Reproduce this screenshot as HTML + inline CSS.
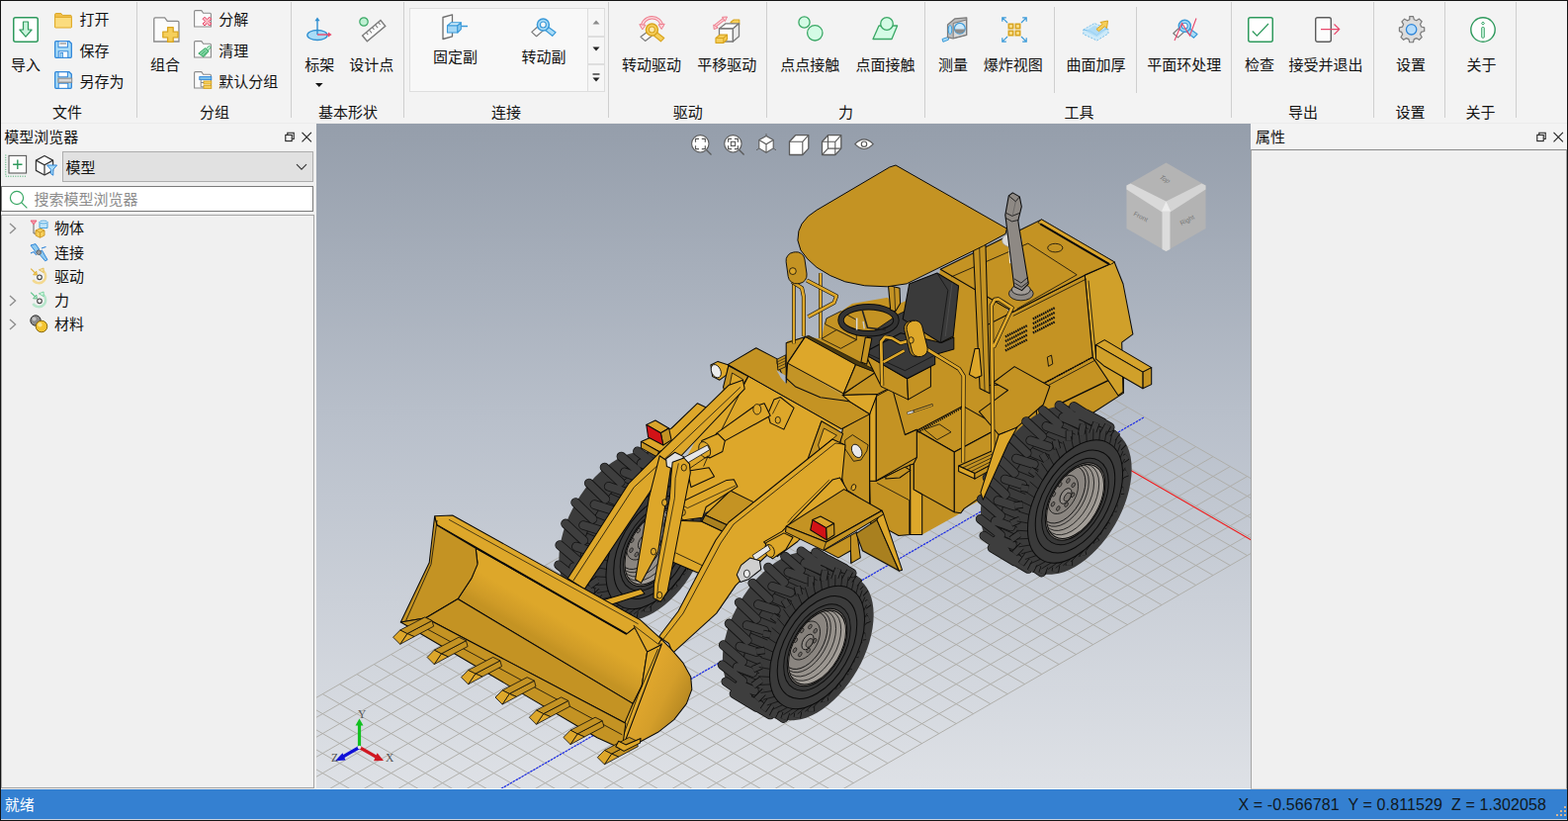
<!DOCTYPE html>
<html lang="zh-CN"><head><meta charset="utf-8"><title>CAD</title>
<style>
html,body{margin:0;padding:0}
body{width:1586px;height:830px;position:relative;overflow:hidden;background:#f0f0f0;font-family:"Liberation Sans","Noto Sans CJK SC",sans-serif;font-size:15px;color:#111}
.t{position:absolute;white-space:nowrap;line-height:20px;height:20px;font-size:15px}
.st{color:#101820;font-size:16px;letter-spacing:0.1px}
.ic{position:absolute;overflow:visible}
.tx{color:#111;font-family:"Liberation Sans","Noto Sans CJK SC",sans-serif}
#ribbon{position:absolute;left:0;top:0;width:1586px;height:125px;background:#f3f3f3;border-top:1px solid #141414;box-sizing:border-box;border-bottom:1px solid #ececec}
.sep{position:absolute;width:1px;background:#cfcfcf}
#gal{position:absolute;left:414px;top:8px;width:198px;height:85px;box-sizing:border-box;border:1px solid #dedede;background:#f8f8f8}
.galb{position:absolute;left:594px;width:18px;box-sizing:border-box;border:1px solid #dedede;background:#f6f6f6}
#lp{position:absolute;left:0;top:125px;width:319px;height:673px;background:#f0f0f0}
#lphead{position:absolute;left:0;top:125px;width:319px;height:27px;background:#f3f3f3}
#combo{position:absolute;left:63px;top:153px;width:254px;height:31px;box-sizing:border-box;border:1px solid #adadad;background:#e1e1e1}
#search{position:absolute;left:1px;top:188px;width:316px;height:26px;box-sizing:border-box;border:1px solid #7a7a7a;background:#fff}
#tree{position:absolute;left:1px;top:217px;width:317px;height:580px;box-sizing:border-box;border:1px solid #a5a5a5;background:#f0f0f0}
#rp{position:absolute;left:1265px;top:125px;width:321px;height:673px;background:#f0f0f0}
#rphead{position:absolute;left:1265px;top:125px;width:321px;height:26px;background:#f3f3f3}
#rpbox{position:absolute;left:1265px;top:151px;width:320px;height:647px;box-sizing:border-box;border:1px solid #a5a5a5;border-top-color:#8a8a8a;border-bottom-color:#d6d2cd;background:#f0f0f0}
#status{position:absolute;left:0;top:798px;width:1586px;height:31px;background:#3480d1;box-sizing:border-box;border-bottom:1px solid #c9d3df}
#frame{position:absolute;left:0;top:0;width:1586px;height:830px;box-sizing:border-box;border:1px solid #141414;z-index:9;pointer-events:none}
#vpb{position:absolute;left:320px;top:797px;width:945px;height:1px;background:#fbfbfb;z-index:3}
#vp{position:absolute;left:320px;top:125px;width:945px;height:673px;display:block}
</style></head>
<body>
<div id="ribbon"></div>
<div class="sep" style="left:138px;top:2px;height:117px"></div>
<div class="sep" style="left:294px;top:2px;height:117px"></div>
<div class="sep" style="left:408px;top:2px;height:117px"></div>
<div class="sep" style="left:615px;top:2px;height:117px"></div>
<div class="sep" style="left:775px;top:2px;height:117px"></div>
<div class="sep" style="left:935px;top:2px;height:117px"></div>
<div class="sep" style="left:1245px;top:2px;height:117px"></div>
<div class="sep" style="left:1389px;top:2px;height:117px"></div>
<div class="sep" style="left:1461px;top:2px;height:117px"></div>
<div class="sep" style="left:1533px;top:2px;height:117px"></div>
<div class="sep" style="left:1066px;top:7px;height:87px"></div>
<div class="sep" style="left:1149px;top:7px;height:87px"></div>
<div id="gal"></div><div class="galb" style="top:8px;height:29px"></div><div class="galb" style="top:37px;height:28px"></div><div class="galb" style="top:65px;height:28px"></div>
<svg class="ic" style="left:598px;top:17px" width="10" height="80" viewBox="0 0 10 80"><path d="M1.5 7.5h7L5 3.5z" fill="#8a8a8a"/><path d="M1.5 30.5h7L5 34.5z" fill="#222"/><path d="M1.5 58h7" stroke="#222" stroke-width="1.3"/><path d="M1.5 61.5h7L5 65.5z" fill="#222"/></svg>
<svg class="ic" style="left:13px;top:17px" width="28" height="28" viewBox="0 0 28 28"><rect x="0.75" y="0.75" width="24.5" height="24.5" rx="2" fill="#fff" stroke="#2f9a5d" stroke-width="1.5"/><path d="M10.5 5h5v8h3.6L13 20.2 6.9 13h3.6z" fill="#c9f3dc" stroke="#2f9a5d" stroke-width="1.2" stroke-linejoin="round"/></svg>
<span class="t tx" style="left:-34.0px;top:55.5px;width:120px;text-align:center;">导入</span>
<svg class="ic" style="left:154.5px;top:17px" width="28" height="28" viewBox="0 0 28 28"><path d="M0.75 25V2.2q0-1.4 1.4-1.4h9.5l2.6 3.6h10.3q1.4 0 1.4 1.4V25z" fill="#fbfbfb" stroke="#8a8a8a" stroke-width="1.3"/><path d="M14.6 10.6h5.6v4.6h4.8v5.6h-4.8v4.6h-5.6v-4.6h-4.8v-5.6h4.8z" fill="#f6cf5a" stroke="#d9a520" stroke-width="1.3" stroke-linejoin="round"/></svg>
<span class="t tx" style="left:107.0px;top:55.5px;width:120px;text-align:center;">组合</span>
<svg class="ic" style="left:310px;top:17px" width="28" height="28" viewBox="0 0 28 28"><ellipse cx="11" cy="18.5" rx="10.2" ry="5" fill="#a9dcf7" stroke="#2f8fd1" stroke-width="1.3"/><path d="M11 18V3" stroke="#2f8fd1" stroke-width="1.4"/><path d="M8.4 4.2L11 0.4l2.6 3.8z" fill="#2f8fd1"/><path d="M11 18h12" stroke="#e8486b" stroke-width="1.4"/><path d="M22 15.6l3.6 2.4-3.6 2.4z" fill="#e8486b"/></svg>
<span class="t tx" style="left:263.3px;top:55.5px;width:120px;text-align:center;">标架</span>
<svg class="ic" style="left:363px;top:17px" width="28" height="28" viewBox="0 0 28 28"><circle cx="5" cy="5" r="4.2" fill="#bff0d3" stroke="#3aa865" stroke-width="1.2"/><g transform="rotate(-40 15 14)"><rect x="3" y="10.5" width="24" height="7.5" fill="#fafafa" stroke="#7b7b7b" stroke-width="1.4"/><path d="M8 10.5v3M12 10.5v4M16 10.5v3M20 10.5v4M24 10.5v3" stroke="#7b7b7b" stroke-width="1"/></g></svg>
<span class="t tx" style="left:315.8px;top:55.5px;width:120px;text-align:center;">设计点</span>
<svg class="ic" style="left:446.5px;top:14px" width="28" height="28" viewBox="0 0 28 28"><path d="M1 3.5l9.5-2.7v22L1 25.5z" fill="#fafafa" stroke="#6e6e6e" stroke-width="1.3" stroke-linejoin="round"/><path d="M5.5 12l3.6-3.2h10.2L15.8 12z" fill="#cfeaf9" stroke="#3a9ad9" stroke-width="1.1" stroke-linejoin="round"/><path d="M5.5 12h10.3v7H5.5z" fill="#a5d7f5" stroke="#3a9ad9" stroke-width="1.1" stroke-linejoin="round"/><path d="M15.8 12l3.5-3.2v6.8l-3.5 3.4z" fill="#8fcaee" stroke="#3a9ad9" stroke-width="1.1" stroke-linejoin="round"/><path d="M19.5 12.5H26" stroke="#3a9ad9" stroke-width="1.5"/></svg>
<span class="t tx" style="left:400.6px;top:48.0px;width:120px;text-align:center;">固定副</span>
<svg class="ic" style="left:537px;top:18px" width="28" height="28" viewBox="0 0 28 28"><path d="M8 8l5 4.4-7.4 6.3L0.8 14.4z" fill="#fafafa" stroke="#7a7a7a" stroke-width="1.2" stroke-linejoin="round"/><path d="M16.5 8.5l8.6 6.2-3.4 3.6-8-6.6z" fill="#a9dcf7" stroke="#3a9ad9" stroke-width="1.2" stroke-linejoin="round"/><circle cx="12.4" cy="7" r="6" fill="#a9dcf7" stroke="#3a9ad9" stroke-width="1.5"/><circle cx="12.4" cy="7" r="3" fill="#f7f7f7" stroke="#3a9ad9" stroke-width="1.2"/></svg>
<span class="t tx" style="left:490.0px;top:48.0px;width:120px;text-align:center;">转动副</span>
<svg class="ic" style="left:647px;top:15.5px" width="28" height="28" viewBox="0 0 28 28"><path d="M2.5 11.5A10 9.5 0 0 1 22.5 11" fill="none" stroke="#ee7d8d" stroke-width="3.4"/><path d="M2.5 11.5A10 9.5 0 0 1 22.5 11" fill="none" stroke="#fbd3d9" stroke-width="1.6"/><path d="M-0.2 8.6l3 5.3 3.2-4.6z" fill="#fbd3d9" stroke="#ee7d8d" stroke-width="1"/><path d="M25.2 8.2l-3 5.3-3.2-4.6z" fill="#fbd3d9" stroke="#ee7d8d" stroke-width="1"/><path d="M8 16l4.6 4-7 5.4-4.6-4.2z" fill="#fafafa" stroke="#7a7a7a" stroke-width="1.2" stroke-linejoin="round"/><path d="M16.5 16l8.3 6.4-3.4 3.4-8-6.6z" fill="#f6cf5a" stroke="#d9a520" stroke-width="1.2" stroke-linejoin="round"/><circle cx="12.4" cy="14" r="6" fill="#f6cf5a" stroke="#d9a520" stroke-width="1.5"/><circle cx="12.4" cy="14" r="3" fill="#fbe9ac" stroke="#d9a520" stroke-width="1.1"/></svg>
<span class="t tx" style="left:599.1px;top:55.5px;width:120px;text-align:center;">转动驱动</span>
<svg class="ic" style="left:722px;top:16.5px" width="28" height="28" viewBox="0 0 28 28"><path d="M1 9.5L10.5 2" stroke="#ee7d8d" stroke-width="3.2"/><path d="M1 9.5L10.5 2" stroke="#fbd3d9" stroke-width="1.4"/><path d="M8.5 0.3l5 -0.3-2.2 4.6z" fill="#fbd3d9" stroke="#ee7d8d" stroke-width="1"/><path d="M-0.2 8l0.4 4.6 4-1.6z" fill="#fbd3d9" stroke="#ee7d8d" stroke-width="1"/><path d="M17 5.5l3.2-2.5h5.6v4.5l-3 2z" fill="#f6cf5a" stroke="#d9a520" stroke-width="1.1" stroke-linejoin="round"/><path d="M5.5 12L12 6.8h13.5L19.4 12z" fill="#fff" stroke="#7a7a7a" stroke-width="1.3" stroke-linejoin="round"/><path d="M5.5 12h13.9v13H5.5z" fill="#fcfcfc" stroke="#7a7a7a" stroke-width="1.3" stroke-linejoin="round"/><path d="M19.4 12l6.1-5.2v13L19.4 25z" fill="#ececec" stroke="#7a7a7a" stroke-width="1.3" stroke-linejoin="round"/><path d="M2 21.5l4-3.3h7.5v4.6L9.8 26.3H2z" fill="#f6cf5a" stroke="#d9a520" stroke-width="1.2" stroke-linejoin="round"/><path d="M2 21.5h7.8v4.8M9.8 21.5l3.7-3.3" fill="none" stroke="#d9a520" stroke-width="1.1"/></svg>
<span class="t tx" style="left:675.2px;top:55.5px;width:120px;text-align:center;">平移驱动</span>
<svg class="ic" style="left:806.5px;top:16px" width="28" height="28" viewBox="0 0 28 28"><circle cx="6.5" cy="6.5" r="5.6" fill="#d4fbe5" stroke="#3aa865" stroke-width="1.3"/><circle cx="17.3" cy="17.3" r="7.7" fill="#d4fbe5" stroke="#3aa865" stroke-width="1.3"/></svg>
<span class="t tx" style="left:759.3px;top:55.5px;width:120px;text-align:center;">点点接触</span>
<svg class="ic" style="left:882px;top:17px" width="28" height="28" viewBox="0 0 28 28"><path d="M7 9h18.6l-5.6 13.5H1z" fill="#d4fbe5" stroke="#3aa865" stroke-width="1.3" stroke-linejoin="round"/><circle cx="15" cy="7" r="6.3" fill="#d4fbe5" stroke="#3aa865" stroke-width="1.3"/></svg>
<span class="t tx" style="left:835.4px;top:55.5px;width:120px;text-align:center;">点面接触</span>
<svg class="ic" style="left:952px;top:17px" width="28" height="28" viewBox="0 0 28 28"><path d="M1 22.5l6.5-2.2v2.8l-5.6 2.2z" fill="#a9dcf7" stroke="#3a9ad9" stroke-width="1"/><path d="M6.5 8L14 1.8l11.8-1v17.5L12 22 6.5 20.7z" fill="#bdbdbd" stroke="#7a7a7a" stroke-width="1.2" stroke-linejoin="round"/><path d="M12.2 6.5L25.5 3v15.2L12.2 21.6z" fill="#d9d9d9" stroke="#7a7a7a" stroke-width="1"/><ellipse cx="9" cy="13" rx="1.8" ry="4.5" fill="#a9dcf7" stroke="#3a9ad9" stroke-width="0.9"/><circle cx="18.8" cy="11.8" r="5.4" fill="#cde9fa" stroke="#3a9ad9" stroke-width="1.2"/><path d="M13.5 12.5a5.4 5.4 0 0 0 10.6 0z" fill="#8c8c8c"/></svg>
<span class="t tx" style="left:904.0px;top:55.5px;width:120px;text-align:center;">测量</span>
<svg class="ic" style="left:1012.5px;top:17px" width="28" height="28" viewBox="0 0 28 28"><g fill="#fbe08a" stroke="#d9a520" stroke-width="1.6"><rect x="7.3" y="7.3" width="4.4" height="4.4"/><rect x="14.3" y="7.3" width="4.4" height="4.4"/><rect x="7.3" y="14.3" width="4.4" height="4.4"/><rect x="14.3" y="14.3" width="4.4" height="4.4"/></g><g fill="none" stroke="#3a9ad9" stroke-width="1.2"><path d="M6 6L0.8 0.8M0.8 4.8V0.8H4.8M20 6l5.2-5.2M21.2 0.8h4v4M6 20L0.8 25.2M0.8 21.2v4h4M20 20l5.2 5.2M25.2 21.2v4h-4"/></g></svg>
<span class="t tx" style="left:964.7px;top:55.5px;width:120px;text-align:center;">爆炸视图</span>
<svg class="ic" style="left:1094.5px;top:18px" width="28" height="28" viewBox="0 0 28 28"><path d="M0.8 12L12 5.5 26 11.5v4.5L14.5 23 0.8 16.5z" fill="#cdeaf9" stroke="#7cc0ea" stroke-width="1" stroke-dasharray="2 1.4"/><path d="M0.8 12q7 0 13.7 5.5Q20 11 26 11.5" fill="none" stroke="#7cc0ea" stroke-width="1"/><path d="M3 13.5L12 8l11.5 4.8-9 6.4z" fill="#a5d7f5" opacity=".75"/><path d="M14 11.5l6-5-2-2 7.5-1.5-1 7.6-2-2-6 5z" fill="#f6cf5a" stroke="#d9a520" stroke-width="1" stroke-linejoin="round"/></svg>
<span class="t tx" style="left:1048.4px;top:55.5px;width:120px;text-align:center;">曲面加厚</span>
<svg class="ic" style="left:1186px;top:18px" width="28" height="28" viewBox="0 0 28 28"><path d="M7.5 9.5l5 4-7 6.4-4.7-4.2z" fill="#fafafa" stroke="#7a7a7a" stroke-width="1.2" stroke-linejoin="round"/><path d="M16 10l9 6.5-3.5 3.7-8-6.6z" fill="#a9dcf7" stroke="#3a9ad9" stroke-width="1.2" stroke-linejoin="round"/><circle cx="12.3" cy="8.3" r="6" fill="#a9dcf7" stroke="#3a9ad9" stroke-width="1.5"/><circle cx="12.3" cy="8.3" r="3" fill="#f7f7f7" stroke="#3a9ad9" stroke-width="1.1"/><path d="M2 23L9.5 5.5 17.5 18 24 0.5" fill="none" stroke="#e8486b" stroke-width="1.1"/></svg>
<span class="t tx" style="left:1137.7px;top:55.5px;width:120px;text-align:center;">平面环处理</span>
<svg class="ic" style="left:1261.5px;top:17px" width="28" height="28" viewBox="0 0 28 28"><rect x="0.75" y="0.75" width="24.5" height="24.5" rx="2" fill="#fff" stroke="#2f9a5d" stroke-width="1.5"/><path d="M4.8 14.5l4.6 4.6L21 7" fill="none" stroke="#2f9a5d" stroke-width="1.3"/></svg>
<span class="t tx" style="left:1214.0px;top:55.5px;width:120px;text-align:center;">检查</span>
<svg class="ic" style="left:1330px;top:17px" width="28" height="28" viewBox="0 0 28 28"><rect x="0.7" y="0.7" width="15.6" height="24.6" rx="2" fill="#fcfcfc" stroke="#5c5c5c" stroke-width="1.4"/><path d="M6 12.6h18.5M19.5 7.5l5.2 5.1-5.2 5.1" fill="none" stroke="#e8486b" stroke-width="1.2"/></svg>
<span class="t tx" style="left:1281.1px;top:55.5px;width:120px;text-align:center;">接受并退出</span>
<svg class="ic" style="left:1414.5px;top:17px" width="28" height="28" viewBox="0 0 28 28"><path d="M11 0.8h4l0.9 3.4 2.6 1.1 3-1.8 2.9 2.9-1.8 3 1.1 2.6 3.4 0.9v4l-3.4 0.9-1.1 2.6 1.8 3-2.9 2.9-3-1.8-2.6 1.1-0.9 3.4h-4l-0.9-3.4-2.6-1.1-3 1.8-2.9-2.9 1.8-3-1.1-2.6L-0.1 17v-4l3.4-0.9 1.1-2.6-1.8-3 2.9-2.9 3 1.8 2.6-1.1z" transform="translate(0.5,-1.2) scale(0.93)" fill="#dcdcdc" stroke="#7a7a7a" stroke-width="1.3" stroke-linejoin="round"/><circle cx="12.6" cy="12.8" r="5.2" fill="#b6dcfa" stroke="#2f86d9" stroke-width="1.3"/></svg>
<span class="t tx" style="left:1366.9px;top:55.5px;width:120px;text-align:center;">设置</span>
<svg class="ic" style="left:1486.5px;top:17px" width="28" height="28" viewBox="0 0 28 28"><circle cx="13" cy="13" r="12.2" fill="#fdfdfd" stroke="#2f9a5d" stroke-width="1.4"/><path d="M13 5l1.5 1.6L13 8.2l-1.5-1.6z" fill="#d4fbe5" stroke="#2f9a5d" stroke-width="0.9"/><rect x="11.7" y="10.6" width="2.6" height="10.6" rx="0.6" fill="#d4fbe5" stroke="#2f9a5d" stroke-width="0.9"/></svg>
<span class="t tx" style="left:1438.5px;top:55.5px;width:120px;text-align:center;">关于</span>
<svg class="ic" style="left:318px;top:83px" width="10" height="6" viewBox="0 0 10 6"><path d="M1 1h7.6L4.8 5z" fill="#111"/></svg>
<svg class="ic" style="left:55px;top:11.5px" width="19" height="19" viewBox="0 0 19 19"><path d="M0.6 15.4V2.6q0-1 1-1h5.3l1.4 1.8h8q1 0 1 1v11z" fill="#f2c04a" stroke="#d9a520" stroke-width="1"/><path d="M0.6 15.4V6.4q0-1 1-1h14.7q1 0 1 1v9q0 0.6-0.6 0.6H1.2q-0.6 0-0.6-0.6z" fill="#fbdc7e" stroke="#e0aa28" stroke-width="1"/></svg>
<span class="t tx" style="left:80.4px;top:10.3px;">打开</span>
<svg class="ic" style="left:55px;top:41px" width="19" height="19" viewBox="0 0 19 19"><path d="M0.7 1.7q0-1 1-1h13.2l2.4 2.4v13.2q0 1-1 1H1.7q-1 0-1-1z" fill="#a9dcf7" stroke="#2f86d9" stroke-width="1.3"/><rect x="4" y="0.8" width="9.4" height="6" fill="#fff" stroke="#2f86d9" stroke-width="1"/><path d="M5.5 3h6.5" stroke="#9a9a9a" stroke-width="1.4"/><rect x="4.2" y="10.8" width="9.6" height="6.5" fill="#fff" stroke="#2f86d9" stroke-width="1"/><rect x="6" y="12.4" width="2.6" height="4.9" fill="#a9dcf7" stroke="#2f86d9" stroke-width=".8"/></svg>
<span class="t tx" style="left:80.4px;top:41.5px;">保存</span>
<svg class="ic" style="left:55px;top:72px" width="19" height="19" viewBox="0 0 19 19"><path d="M0.7 1.7q0-1 1-1h13.2l2.4 2.4v13.2q0 1-1 1H1.7q-1 0-1-1z" fill="#a9dcf7" stroke="#2f86d9" stroke-width="1.3"/><rect x="4" y="0.8" width="9.4" height="5" fill="#fff" stroke="#2f86d9" stroke-width="1"/><rect x="4.2" y="12.2" width="9.6" height="5.1" fill="#fff" stroke="#2f86d9" stroke-width="1"/><rect x="3.8" y="7" width="14" height="4.4" fill="#b5b5b5" stroke="#8a8a8a" stroke-width="0.8"/><path d="M6 8.2v2M8 8.2v2M10 8.2v2M12 8.2v2M14 8.2v2M16 8.2v2" stroke="#fff" stroke-width="1"/></svg>
<span class="t tx" style="left:80.4px;top:72.6px;">另存为</span>
<svg class="ic" style="left:196px;top:10px" width="19" height="19" viewBox="0 0 19 19"><path d="M0.6 17V1.6q0-1 1-1h6.2l1.8 2.6h6.8q1 0 1 1V17z" fill="#fbfbfb" stroke="#8a8a8a" stroke-width="1.1"/><path d="M9 9.2l2-2 2.4 2.4 2.4-2.4 2 2-2.4 2.4 2.4 2.4-2 2-2.4-2.4L11 16l-2-2 2.4-2.4z" fill="#f9b8c2" stroke="#e8486b" stroke-width="1" stroke-linejoin="round"/></svg>
<span class="t tx" style="left:221.3px;top:10.3px;">分解</span>
<svg class="ic" style="left:196px;top:41px" width="19" height="19" viewBox="0 0 19 19"><path d="M0.6 17V1.6q0-1 1-1h6.2l1.8 2.6h6.8q1 0 1 1V17z" fill="#fbfbfb" stroke="#8a8a8a" stroke-width="1.1"/><path d="M15.8 5.2l1.6 1.6-3 3.4-2-2z" fill="#bff0d3" stroke="#3aa865" stroke-width="0.9"/><path d="M11.6 7.6l3.4 3.4-5 5.6-5.2-3.6z" fill="#7fd6a3" stroke="#3aa865" stroke-width="1" stroke-linejoin="round"/><path d="M7.5 14.6l4-4.4M9.5 15.8l3.6-4.2" stroke="#3aa865" stroke-width="0.8"/></svg>
<span class="t tx" style="left:221.3px;top:41.5px;">清理</span>
<svg class="ic" style="left:196px;top:72px" width="19" height="19" viewBox="0 0 19 19"><path d="M0.6 17V1.6q0-1 1-1h6.2l1.8 2.6h6.8q1 0 1 1V17z" fill="#fbfbfb" stroke="#8a8a8a" stroke-width="1.1"/><rect x="5.8" y="5.6" width="12" height="3" fill="#7cc0ea" stroke="#2f86d9" stroke-width="0.9"/><rect x="10" y="10" width="7.8" height="3" fill="#f6cf5a" stroke="#d9a520" stroke-width="0.9"/><rect x="10" y="14.4" width="7.8" height="3" fill="#f6cf5a" stroke="#d9a520" stroke-width="0.9"/><path d="M7.2 8.6v7.2h2.8M7.2 11.5h2.8" fill="none" stroke="#7a7a7a" stroke-width="0.9"/></svg>
<span class="t tx" style="left:221.3px;top:72.6px;">默认分组</span>
<span class="t tx" style="left:8.0px;top:104.0px;width:120px;text-align:center;">文件</span>
<span class="t tx" style="left:157.0px;top:104.0px;width:120px;text-align:center;">分组</span>
<span class="t tx" style="left:292.0px;top:104.0px;width:120px;text-align:center;">基本形状</span>
<span class="t tx" style="left:452.0px;top:104.0px;width:120px;text-align:center;">连接</span>
<span class="t tx" style="left:635.8px;top:104.0px;width:120px;text-align:center;">驱动</span>
<span class="t tx" style="left:795.5px;top:104.0px;width:120px;text-align:center;">力</span>
<span class="t tx" style="left:1031.6px;top:104.0px;width:120px;text-align:center;">工具</span>
<span class="t tx" style="left:1257.9px;top:104.0px;width:120px;text-align:center;">导出</span>
<span class="t tx" style="left:1366.5px;top:104.0px;width:120px;text-align:center;">设置</span>
<span class="t tx" style="left:1437.5px;top:104.0px;width:120px;text-align:center;">关于</span>
<div id="lp"></div><div id="lphead"></div>
<span class="t tx" style="left:4.2px;top:129.0px;">模型浏览器</span>
<svg class="ic" style="left:288px;top:133px" width="28" height="12" viewBox="0 0 28 12"><path d="M2.8 3.2V1.3h6.4v6.2H7.6" fill="none" stroke="#222" stroke-width="1.1"/><rect x="0.8" y="3.4" width="6.4" height="6.2" fill="none" stroke="#222" stroke-width="1.1"/><path d="M17.5 0.8l9.4 9.6M26.9 0.8l-9.4 9.6" stroke="#222" stroke-width="1.1"/></svg>
<svg class="ic" style="left:5px;top:156px" width="24" height="24" viewBox="0 0 24 24"><path d="M0.8 0.5V22.2H22" fill="none" stroke="#3aa865" stroke-width="1" stroke-dasharray="1 1.4"/><rect x="4" y="1.4" width="17.6" height="17.6" fill="#fdfdfd" stroke="#5c5c5c" stroke-width="1.1"/><path d="M12.8 5.5v9.4M8.1 10.2h9.4" stroke="#2f9a5d" stroke-width="1.4"/></svg>
<svg class="ic" style="left:35px;top:156px" width="24" height="24" viewBox="0 0 24 24"><path d="M10 1.5l8.6 4.6v10.3L10 21 1.4 16.4V6.1z" fill="#fdfdfd" stroke="#333" stroke-width="1.2" stroke-linejoin="round"/><path d="M1.4 6.1L10 10.8l8.6-4.7M10 10.8V21" fill="none" stroke="#333" stroke-width="1.2"/><path d="M12.6 11h10l-3.8 4.4v5.8l-2.4-1.6v-4.2z" fill="#a9dcf7" stroke="#2f86d9" stroke-width="1" stroke-linejoin="round"/></svg>
<div id="combo"></div>
<span class="t tx" style="left:66.5px;top:159.8px;">模型</span>
<svg class="ic" style="left:299px;top:165px" width="12" height="8" viewBox="0 0 12 8"><path d="M1 1.2l5 5 5-5" fill="none" stroke="#333" stroke-width="1.1"/></svg>
<div id="search"></div>
<svg class="ic" style="left:9px;top:192px" width="20" height="20" viewBox="0 0 20 20"><circle cx="8" cy="8" r="6.6" fill="none" stroke="#3aa865" stroke-width="1.2"/><path d="M12.8 12.8l5.6 5.6" stroke="#3aa865" stroke-width="1.2"/></svg>
<span class="t tx" style="left:34.6px;top:191.5px;color:#8c8c8c;">搜索模型浏览器</span>
<div id="tree"></div>
<svg class="ic" style="left:9px;top:225.4px" width="8" height="12" viewBox="0 0 8 12"><path d="M1 1l5.600 5-5.600 5" fill="none" stroke="#8c8c8c" stroke-width="1.300"/></svg>
<svg class="ic" style="left:30px;top:221.9px" width="20" height="20" viewBox="0 0 20 20"><path d="M1 1h6L4 5z" fill="#f39aa6" stroke="#e8486b" stroke-width=".8"/><path d="M4 5v9h3" fill="none" stroke="#666" stroke-width="1"/><path d="M10 2.5h8v6h-8z" fill="#bfe3f8" stroke="#3a9ad9" stroke-width=".9"/><ellipse cx="14" cy="2.5" rx="4" ry="1.4" fill="#dff1fb" stroke="#3a9ad9" stroke-width=".8"/><path d="M6 11l4.5-2 4.5 2v5l-4.5 2.3L6 16z" fill="#f6cf5a" stroke="#c9921c" stroke-width=".9" stroke-linejoin="round"/><path d="M6 11l4.5 2 4.5-2M10.500 13v5" fill="none" stroke="#c9921c" stroke-width=".8"/></svg>
<span class="t tx" style="left:54.9px;top:221.4px;">物体</span>
<svg class="ic" style="left:30px;top:246.3px" width="20" height="20" viewBox="0 0 20 20"><path d="M1 2l5-1.4 3.6 5.4-3 3.400z" fill="#8fcaee" stroke="#2f86d9" stroke-width="1" stroke-linejoin="round"/><path d="M9 10l3.400-3 5.600 9.600-2.400 1.200z" fill="#8fcaee" stroke="#2f86d9" stroke-width="1" stroke-linejoin="round"/><path d="M1 10l3-1.400 3 3.400M12 5l4.500-1.600" fill="none" stroke="#2f86d9" stroke-width="1.100"/><circle cx="9.200" cy="9.200" r="2.300" fill="#9a9a9a" stroke="#555" stroke-width=".8"/></svg>
<span class="t tx" style="left:54.9px;top:245.8px;">连接</span>
<svg class="ic" style="left:30px;top:270.4px" width="20" height="20" viewBox="0 0 20 20"><path d="M1.200 1.600l4.600 4.600" stroke="#e0b13a" stroke-width="1.200"/><path d="M3.600 7.800l3.800 0.200-0.600-3.800z" fill="#f6cf5a" stroke="#d9a520" stroke-width=".7"/><path d="M12.800 3.200a7 7 0 1 1-9.500 9.800" fill="none" stroke="#f3d990" stroke-width="2.400"/><path d="M9.300 2.800l4.800-1.800 0 4.600z" fill="#f6e2a6" stroke="#e0b13a" stroke-width=".7"/><circle cx="10" cy="10.300" r="2.300" fill="#fafafa" stroke="#444" stroke-width="1.100"/></svg>
<span class="t tx" style="left:54.9px;top:269.9px;">驱动</span>
<svg class="ic" style="left:9px;top:297.7px" width="8" height="12" viewBox="0 0 8 12"><path d="M1 1l5.600 5-5.600 5" fill="none" stroke="#8c8c8c" stroke-width="1.300"/></svg>
<svg class="ic" style="left:30px;top:294.2px" width="20" height="20" viewBox="0 0 20 20"><path d="M1.200 1.600l4.600 4.600" stroke="#5cc48a" stroke-width="1.200"/><path d="M3.600 7.800l3.800 0.200-0.600-3.800z" fill="#bff0d3" stroke="#3aa865" stroke-width=".7"/><path d="M12.800 3.200a7 7 0 1 1-9.500 9.800" fill="none" stroke="#b6e6cb" stroke-width="2.400"/><path d="M9.300 2.800l4.800-1.800 0 4.600z" fill="#d4fbe5" stroke="#5cc48a" stroke-width=".7"/><circle cx="10" cy="10.300" r="2.300" fill="#fafafa" stroke="#444" stroke-width="1.100"/></svg>
<span class="t tx" style="left:54.9px;top:293.7px;">力</span>
<svg class="ic" style="left:9px;top:321.8px" width="8" height="12" viewBox="0 0 8 12"><path d="M1 1l5.600 5-5.600 5" fill="none" stroke="#8c8c8c" stroke-width="1.300"/></svg>
<svg class="ic" style="left:30px;top:318.3px" width="20" height="20" viewBox="0 0 20 20"><circle cx="6" cy="6" r="5.200" fill="#8a8a8a" stroke="#333" stroke-width="1"/><circle cx="4.600" cy="4.400" r="2" fill="#c4c4c4"/><circle cx="12" cy="12" r="5.800" fill="#f4c430" stroke="#8a6a10" stroke-width="1"/><circle cx="10.400" cy="10.200" r="2.200" fill="#fbe48e"/></svg>
<span class="t tx" style="left:54.9px;top:317.8px;">材料</span>
<div id="rp"></div><div id="rphead"></div><div id="rpbox"></div>
<span class="t tx" style="left:1270.0px;top:128.6px;">属性</span>
<svg class="ic" style="left:1554px;top:133px" width="28" height="12" viewBox="0 0 28 12"><path d="M2.8 3.200V1.300h6.400v6.200H7.600" fill="none" stroke="#222" stroke-width="1.100"/><rect x="0.800" y="3.400" width="6.400" height="6.200" fill="none" stroke="#222" stroke-width="1.100"/><path d="M17.500 0.800l9.400 9.600M26.900 0.800l-9.400 9.600" stroke="#222" stroke-width="1.100"/></svg>
<div id="vpb"></div><div id="status"></div><div id="frame"></div>
<span class="t tx" style="left:4.7px;top:803.5px;color:#fff;">就绪</span>
<span class="t st" style="left:1252.5px;top:804.3px;">X = -0.566781&nbsp; Y = 0.811529&nbsp; Z = 1.302058</span>
<svg class="ic" style="left:1574px;top:815px" width="12" height="12" viewBox="0 0 12 12"><g fill="#d8b690"><rect x="8" y="0" width="2" height="2"/><rect x="4" y="4" width="2" height="2"/><rect x="8" y="4" width="2" height="2"/><rect x="0" y="8" width="2" height="2"/><rect x="4" y="8" width="2" height="2"/><rect x="8" y="8" width="2" height="2"/></g></svg>
<svg id="vp" viewBox="320 125 945 673" width="945" height="673">
<defs><linearGradient id="bg" x1="0" y1="0" x2="0" y2="1"><stop offset="0" stop-color="#959eab"/><stop offset="0.45" stop-color="#b9c0cb"/><stop offset="1" stop-color="#dee1e6"/></linearGradient></defs>
<rect x="320" y="125" width="945" height="673" fill="url(#bg)"/>
<path d="M984.5 321.6L151.4 802.6M1001.8 331.6L168.7 812.6M1019.1 341.6L186.0 822.6M1036.5 351.6L203.3 832.6M1053.8 361.6L220.7 842.6M1071.1 371.6L238.0 852.6M1088.4 381.6L255.3 862.6M1105.7 391.6L272.6 872.6M1123.1 401.6L289.9 882.6M1140.4 411.6L307.3 892.6M1157.7 421.6L324.6 902.6M1175.0 431.6L341.9 912.6M1192.3 441.6L359.2 922.6M1209.7 451.6L376.5 932.6M1227.0 461.6L393.9 942.6M1244.3 471.6L411.2 952.6M1261.6 481.6L428.5 962.6M1278.9 491.6L445.8 972.6M1296.3 501.6L463.1 982.6M1313.6 511.6L480.5 992.6M1330.9 521.6L497.8 1002.6M984.5 321.6L1330.9 521.6M967.2 331.6L1313.6 531.6M949.8 341.6L1296.3 541.6M932.5 351.6L1278.9 551.6M915.2 361.6L1261.6 561.6M897.9 371.6L1244.3 571.6M880.6 381.6L1227.0 581.6M863.2 391.6L1209.7 591.6M845.9 401.6L1192.3 601.6M828.6 411.6L1175.0 611.6M811.3 421.6L1157.7 621.6M794.0 431.6L1140.4 631.6M776.6 441.6L1123.1 641.6M759.3 451.6L1105.7 651.6M742.0 461.6L1088.4 661.6M724.7 471.6L1071.1 671.6M707.4 481.6L1053.8 681.6M690.0 491.6L1036.5 691.6M672.7 501.6L1019.1 701.6M655.4 511.6L1001.8 711.6M638.1 521.6L984.5 721.6M620.8 531.6L967.2 731.6M603.4 541.6L949.8 741.6M586.1 551.6L932.5 751.6M568.8 561.6L915.2 761.6M551.5 571.6L897.9 771.6M534.2 581.6L880.6 781.6M516.8 591.6L863.2 791.6M499.5 601.6L845.9 801.6M482.2 611.6L828.6 811.6M464.9 621.6L811.3 821.6M447.6 631.6L794.0 831.6M430.2 641.6L776.6 841.6M412.9 651.6L759.3 851.6M395.6 661.6L742.0 861.6M378.3 671.6L724.7 871.6M361.0 681.6L707.4 881.6M343.6 691.6L690.0 891.6M326.3 701.6L672.7 901.6M309.0 711.6L655.4 911.6M291.7 721.6L638.1 921.6M274.3 731.6L620.8 931.6M257.0 741.6L603.4 941.6M239.7 751.6L586.1 951.6M222.4 761.6L568.8 961.6M205.1 771.6L551.5 971.6M187.7 781.6L534.2 981.6M170.4 791.6L516.8 991.6M153.1 801.6L499.5 1001.6" fill="none" stroke="#acaba6" stroke-width="1" opacity="0.92"/>
<path d="M1156.8 422.1L324.6 902.6" stroke="#1a2cf0" stroke-width="1.2" stroke-dasharray="2.4 1"/>
<path d="M1104.0 452.6L1277.2 552.6" stroke="#f01818" stroke-width="1.1"/>
<g id="loader">
<ellipse cx="623.8" cy="532.0" rx="82.7" ry="47.7" transform="rotate(-60 623.8 532.0)" fill="#3b3b3b"/><polygon points="582.4,603.6 619.7,625.1 702.3,481.9 665.1,460.4" fill="#3b3b3b"/><ellipse cx="661.0" cy="553.5" rx="80.8" ry="46.7" transform="rotate(-60 661.0 553.5)" fill="#3b3b3b"/><path d="M689.8 476.1L706.5 486.9M685.4 472.8L702.3 483.4M680.4 470.5L697.5 480.8M675.0 469.1L692.3 479.2M669.2 468.7L686.6 478.5M663.0 469.3L680.5 478.9M656.6 470.9L674.2 480.2M650.0 473.4L667.7 482.5M643.3 476.9L661.1 485.7M636.7 481.3L654.5 489.8M630.1 486.5L647.9 494.7M623.7 492.4L641.5 500.4M617.6 499.0L635.4 506.8M611.8 506.3L629.5 513.9M606.5 514.0L624.1 521.4M601.6 522.1L619.2 529.3M597.3 530.5L614.7 537.6M593.7 539.0L610.9 546.1M590.7 547.6L607.8 554.6M588.3 556.2L605.3 563.2M586.8 564.6L603.6 571.6M586.0 572.7L602.5 579.7M585.9 580.5L602.3 587.5M586.6 587.7L602.8 594.8M588.1 594.4L604.1 601.6M590.3 600.4L606.1 607.7M593.3 605.6L608.8 613.1M596.9 610.0L612.3 617.7M601.1 613.6L616.3 621.5M605.9 616.2L620.9 624.3M611.2 617.8L626.0 626.2" stroke="#121212" stroke-width="0.9" fill="none"/><path d="M690.8 477.1L687.7 474.4L684.2 472.2L680.5 470.5L676.5 469.4L672.2 468.8L667.7 468.8L663.1 469.3L658.3 470.4L653.4 472.0L648.4 474.2L643.4 476.9L638.4 480.1L633.4 483.7L628.6 487.8L623.8 492.3L619.2 497.3L614.7 502.5L610.5 508.1L606.5 513.9L602.8 519.9L599.5 526.1L596.4 532.5L593.7 538.9L591.4 545.4L589.4 551.8L587.9 558.2L586.8 564.5L586.1 570.7L585.8 576.6L586.0 582.3L586.6 587.7L587.7 592.7L589.1 597.4L591.0 601.7L593.2 605.6L595.9 609.0L598.9 611.9L602.2 614.3L605.8 616.2L609.8 617.5" stroke="#121212" stroke-width="1" fill="none"/><path d="M671.4 464.5L689.0 473.8M678.4 468.2L696.2 478.4M659.6 457.4L676.4 468.1M664.6 465.1L682.9 474.2M644.9 456.3L661.1 468.6M648.7 468.3L667.2 476.3M628.4 461.5L644.4 475.3M631.9 477.4L650.5 484.5M611.5 472.6L627.6 487.6M615.7 491.8L634.1 498.0M595.7 488.5L612.2 504.5M601.4 510.1L619.3 515.7M582.1 508.0L599.4 524.7M590.1 531.0L607.5 536.3M572.0 529.4L590.3 546.4M582.9 552.6L599.5 557.9M566.2 551.1L585.6 567.8M580.2 573.3L596.0 578.9M565.1 571.2L585.6 587.3M582.4 591.3L597.3 597.4M568.8 588.1L590.5 603.2M589.1 605.1L603.3 612.1M577.0 600.4L599.8 614.1M600.0 613.6L613.5 621.5M589.1 607.0L612.7 619.3M614.1 616.0L627.1 625.1" stroke="#121212" stroke-width="9.6" fill="none" stroke-linecap="round"/><path d="M671.4 464.5L689.0 473.8M678.4 468.2L696.2 478.4M659.6 457.4L676.4 468.1M664.6 465.1L682.9 474.2M644.9 456.3L661.1 468.6M648.7 468.3L667.2 476.3M628.4 461.5L644.4 475.3M631.9 477.4L650.5 484.5M611.5 472.6L627.6 487.6M615.7 491.8L634.1 498.0M595.7 488.5L612.2 504.5M601.4 510.1L619.3 515.7M582.1 508.0L599.4 524.7M590.1 531.0L607.5 536.3M572.0 529.4L590.3 546.4M582.9 552.6L599.5 557.9M566.2 551.1L585.6 567.8M580.2 573.3L596.0 578.9M565.1 571.2L585.6 587.3M582.4 591.3L597.3 597.4M568.8 588.1L590.5 603.2M589.1 605.1L603.3 612.1M577.0 600.4L599.8 614.1M600.0 613.6L613.5 621.5M589.1 607.0L612.7 619.3M614.1 616.0L627.1 625.1" stroke="#3e3e3e" stroke-width="8.0" fill="none" stroke-linecap="round"/><path d="M654.9 492.0L654.9 481.7M642.9 500.6L640.8 491.9M631.6 512.1L627.4 505.4M621.6 525.8L615.7 521.5M613.6 540.9L606.3 539.3M608.0 556.5L599.6 557.7M605.1 571.8L596.2 575.7M605.1 585.8L596.2 592.1M608.0 597.7L599.6 606.2M613.6 606.8L606.3 616.9M621.6 612.6L615.7 623.8M631.6 614.8L627.4 626.3M642.9 613.3L640.8 624.5M654.9 608.0L654.9 618.3M667.0 599.4L669.1 608.1M678.3 587.9L682.4 594.6M688.2 574.2L694.2 578.5M696.3 559.1L703.6 560.7M701.9 543.5L710.2 542.3M704.8 528.2L713.7 524.3M704.8 514.2L713.7 507.9M701.9 502.3L710.2 493.8M696.3 493.2L703.6 483.1M688.2 487.4L694.2 476.2M678.3 485.2L682.4 473.7M667.0 486.7L669.1 475.5" stroke="#0e0e0e" stroke-width="7.4" fill="none"/><path d="M654.9 492.0L654.9 481.7M642.9 500.6L640.8 491.9M631.6 512.1L627.4 505.4M621.6 525.8L615.7 521.5M613.6 540.9L606.3 539.3M608.0 556.5L599.6 557.7M605.1 571.8L596.2 575.7M605.1 585.8L596.2 592.1M608.0 597.7L599.6 606.2M613.6 606.8L606.3 616.9M621.6 612.6L615.7 623.8M631.6 614.8L627.4 626.3M642.9 613.3L640.8 624.5M654.9 608.0L654.9 618.3M667.0 599.4L669.1 608.1M678.3 587.9L682.4 594.6M688.2 574.2L694.2 578.5M696.3 559.1L703.6 560.7M701.9 543.5L710.2 542.3M704.8 528.2L713.7 524.3M704.8 514.2L713.7 507.9M701.9 502.3L710.2 493.8M696.3 493.2L703.6 483.1M688.2 487.4L694.2 476.2M678.3 485.2L682.4 473.7M667.0 486.7L669.1 475.5" stroke="#3d3d3d" stroke-width="5.8" fill="none"/><ellipse cx="658.4" cy="552.0" rx="74.7" ry="43.1" transform="rotate(-60 658.4 552.0)" fill="#3a3a3a"/><path d="M656.7 487.5L659.1 499.2M648.8 492.7L652.3 504.0M641.2 499.0L645.6 509.8M633.8 506.4L639.3 516.5M626.9 514.7L633.4 524.0M620.7 523.8L628.1 532.0M615.1 533.4L623.4 540.5M610.4 543.4L619.6 549.3M606.6 553.5L616.5 558.2M603.9 563.6L614.4 566.9M602.2 573.4L613.2 575.4M601.7 582.8L613.0 583.4M602.2 591.5L613.7 590.9M603.9 599.4L615.5 597.5M606.6 606.3L618.1 603.3M610.4 612.0L621.6 608.1M615.1 616.6L626.0 611.7M620.7 619.8L631.0 614.2M626.9 621.6L636.7 615.4M633.8 622.0L642.8 615.4M641.2 620.9L649.3 614.1M648.8 618.4L656.1 611.6M656.7 614.5L662.9 607.8M664.5 609.3L669.7 603.0M672.2 603.0L676.4 597.2M679.5 595.6L682.7 590.5M686.4 587.3L688.6 583.0M692.7 578.2L693.9 575.0M698.2 568.6L698.6 566.5M702.9 558.6L702.4 557.7M706.7 548.5L705.5 548.8M709.4 538.4L707.6 540.1M711.1 528.6L708.8 531.6M711.7 519.2L709.0 523.6M711.1 510.5L708.3 516.1M709.4 502.6L706.5 509.5M706.7 495.7L703.9 503.7M702.9 490.0L700.4 498.9M698.2 485.4L696.0 495.3M692.7 482.2L691.0 492.8M686.4 480.4L685.3 491.6M679.5 480.0L679.2 491.6M672.2 481.1L672.7 492.9M664.5 483.6L665.9 495.4" stroke="#141414" stroke-width="0.9" fill="none"/><ellipse cx="661.0" cy="553.5" rx="68.0" ry="39.2" transform="rotate(-60 661.0 553.5)" fill="#3a3a3a" stroke="#0a0a0a" stroke-width="1.0"/><ellipse cx="661.0" cy="553.5" rx="56.9" ry="32.9" transform="rotate(-60 661.0 553.5)" fill="#3b3b3b" stroke="#0a0a0a" stroke-width="1.0"/><ellipse cx="661.0" cy="553.5" rx="47.8" ry="27.6" transform="rotate(-60 661.0 553.5)" fill="#383838" stroke="#0a0a0a" stroke-width="0.9"/><clipPath id="wc1"><ellipse cx="661.0" cy="553.5" rx="41.0" ry="23.7" transform="rotate(-60 661.0 553.5)"/></clipPath><ellipse cx="661.0" cy="553.5" rx="42.9" ry="24.7" transform="rotate(-60 661.0 553.5)" fill="#7a7570" stroke="#0a0a0a" stroke-width="1.0"/><g clip-path="url(#wc1)"><ellipse cx="661.0" cy="553.5" rx="41.6" ry="24.0" transform="rotate(-60 661.0 553.5)" fill="#a39e98"/><ellipse cx="657.5" cy="551.5" rx="39.2" ry="22.6" transform="rotate(-60 657.5 551.5)" fill="#9b9690" stroke="#0a0a0a" stroke-width="0.7"/><ellipse cx="654.1" cy="549.5" rx="36.7" ry="21.2" transform="rotate(-60 654.1 549.5)" fill="#96918b" stroke="#0a0a0a" stroke-width="0.7"/><ellipse cx="650.6" cy="547.5" rx="34.3" ry="19.8" transform="rotate(-60 650.6 547.5)" fill="#8f8a85" stroke="#0a0a0a" stroke-width="0.7"/><ellipse cx="648.9" cy="546.5" rx="31.8" ry="18.4" transform="rotate(-60 648.9 546.5)" fill="#8a8580" stroke="#0a0a0a" stroke-width="0.8"/><ellipse cx="648.9" cy="546.5" rx="21.4" ry="12.4" transform="rotate(-60 648.9 546.5)" fill="#85807b" stroke="#0a0a0a" stroke-width="0.7"/><ellipse cx="645.7" cy="536.4" rx="2.6" ry="1.5" transform="rotate(-60 645.7 536.4)" fill="#6f6a66" stroke="#0a0a0a" stroke-width="0.6"/><ellipse cx="639.3" cy="546.2" rx="2.6" ry="1.5" transform="rotate(-60 639.3 546.2)" fill="#6f6a66" stroke="#0a0a0a" stroke-width="0.6"/><ellipse cx="638.5" cy="556.2" rx="2.6" ry="1.5" transform="rotate(-60 638.5 556.2)" fill="#6f6a66" stroke="#0a0a0a" stroke-width="0.6"/><ellipse cx="643.8" cy="560.5" rx="2.6" ry="1.5" transform="rotate(-60 643.8 560.5)" fill="#6f6a66" stroke="#0a0a0a" stroke-width="0.6"/><ellipse cx="652.1" cy="556.6" rx="2.6" ry="1.5" transform="rotate(-60 652.1 556.6)" fill="#6f6a66" stroke="#0a0a0a" stroke-width="0.6"/><ellipse cx="658.5" cy="546.8" rx="2.6" ry="1.5" transform="rotate(-60 658.5 546.8)" fill="#6f6a66" stroke="#0a0a0a" stroke-width="0.6"/><ellipse cx="659.2" cy="536.8" rx="2.6" ry="1.5" transform="rotate(-60 659.2 536.8)" fill="#6f6a66" stroke="#0a0a0a" stroke-width="0.6"/><ellipse cx="653.9" cy="532.5" rx="2.6" ry="1.5" transform="rotate(-60 653.9 532.5)" fill="#6f6a66" stroke="#0a0a0a" stroke-width="0.6"/><ellipse cx="651.5" cy="548.0" rx="8.6" ry="4.9" transform="rotate(-60 651.5 548.0)" fill="#908b86" stroke="#0a0a0a" stroke-width="0.8"/><ellipse cx="653.2" cy="549.0" rx="4.9" ry="2.8" transform="rotate(-60 653.2 549.0)" fill="#7d7873" stroke="#0a0a0a" stroke-width="0.7"/></g><ellipse cx="661.0" cy="553.5" rx="41.0" ry="23.7" transform="rotate(-60 661.0 553.5)" fill="none" stroke="#0a0a0a" stroke-width="0.9"/>
<polygon points="796.0,345.0 814.5,340.4 831.0,342.5 834.0,326.0 862.0,307.0 898.0,300.7 903.0,310.0 948.0,290.0 951.0,272.0 1010.0,300.0 1030.0,330.0 1058.0,387.0 1075.0,420.0 1060.0,470.0 993.4,504.7 975.0,514.4 971.8,518.8 932.7,540.4 920.8,540.4 908.9,541.5 887.2,529.6 880.7,529.6 879.6,501.4 862.3,498.2 846.0,466.7 852.5,430.9 852.5,399.5 796.0,365.0" fill="#c49323"/>
<polygon points="1048.4,385.5 1105.4,359.0 1112.0,364.8 1136.4,379.7 1136.4,397.4 1101.4,420.0 1048.4,420.0" fill="#c49323" stroke="#0a0a0a" stroke-width="1.05" stroke-linejoin="round"/><polyline points="1069.6,409.4 1134.5,378.1 1134.5,396.6" fill="none" stroke="#0a0a0a" stroke-width="1.6" stroke-linejoin="round"/><polyline points="1059.0,390.3 1109.4,363.3" fill="none" stroke="#0a0a0a" stroke-width="0.8" stroke-linejoin="round"/><polygon points="1097.3,278.2 1127.2,265.0 1136.0,287.0 1145.9,337.9 1134.7,346.1 1136.0,396.1 1131.0,399.8 1105.2,361.1" fill="#d0a02a" stroke="#0a0a0a" stroke-width="1.05" stroke-linejoin="round"/><polygon points="994.9,330.4 1097.3,278.2 1105.2,361.1 1057.3,386.8 994.9,389.8" fill="#c49323" stroke="#0a0a0a" stroke-width="1.05" stroke-linejoin="round"/><polyline points="1098.8,282.0 1024.8,319.4" fill="none" stroke="#0a0a0a" stroke-width="0.8" stroke-linejoin="round"/><polyline points="1057.3,386.8 1105.2,361.1" fill="none" stroke="#0a0a0a" stroke-width="1.6" stroke-linejoin="round" stroke-dasharray="1.4 1.2"/><polyline points="1101.0,283.7 1108.5,359.9" fill="none" stroke="#0a0a0a" stroke-width="0.8" stroke-linejoin="round"/><polygon points="1053.5,221.9 1127.2,264.9 1097.2,278.1 1024.8,315.3 951.2,272.3" fill="#c49323" stroke="#0a0a0a" stroke-width="1.05" stroke-linejoin="round"/><polygon points="1053.5,221.9 1127.2,264.9 1123.4,267.4 1049.8,224.9" fill="#dba62e" stroke="#0a0a0a" stroke-width="0.7" stroke-linejoin="round"/><polyline points="1052.3,226.4 1121.7,266.9" fill="none" stroke="#0a0a0a" stroke-width="2.0" stroke-linejoin="round"/><polyline points="1039.8,246.1 1089.2,277.8 1028.6,312.3" fill="none" stroke="#0a0a0a" stroke-width="0.8" stroke-linejoin="round"/><polyline points="1039.8,246.1 962.4,279.8" fill="none" stroke="#0a0a0a" stroke-width="0.8" stroke-linejoin="round"/><ellipse cx="1067.3" cy="250.6" rx="7.6" ry="4.3" fill="#c49323" stroke="#0a0a0a" stroke-width="0.8"/><path d="M1016.9 340.4L1038.8 329.2" stroke="#111" stroke-width="2.3" stroke-dasharray="1.6 0.7"/><path d="M1016.9 345.1L1038.8 333.9" stroke="#111" stroke-width="2.3" stroke-dasharray="1.6 0.7"/><path d="M1016.9 349.9L1038.8 338.6" stroke="#111" stroke-width="2.3" stroke-dasharray="1.6 0.7"/><path d="M1016.9 354.6L1038.8 343.4" stroke="#111" stroke-width="2.3" stroke-dasharray="1.6 0.7"/><path d="M1044.8 322.4L1066.8 311.2" stroke="#111" stroke-width="2.3" stroke-dasharray="1.6 0.7"/><path d="M1044.8 327.2L1066.8 315.9" stroke="#111" stroke-width="2.3" stroke-dasharray="1.6 0.7"/><path d="M1044.8 331.9L1066.8 320.7" stroke="#111" stroke-width="2.3" stroke-dasharray="1.6 0.7"/><path d="M1044.8 336.6L1066.8 325.4" stroke="#111" stroke-width="2.3" stroke-dasharray="1.6 0.7"/><polygon points="1059.3,361.1 1063.5,359.1 1064.8,367.9 1060.5,370.3" fill="#c49323" stroke="#0a0a0a" stroke-width="0.9" stroke-linejoin="round"/><polygon points="1108.5,348.6 1117.2,343.6 1164.7,371.6 1155.9,376.1" fill="#d6a42c" stroke="#0a0a0a" stroke-width="1.05" stroke-linejoin="round"/><polygon points="1155.9,376.1 1164.7,371.6 1164.7,388.6 1155.9,392.8" fill="#c49323" stroke="#0a0a0a" stroke-width="1.05" stroke-linejoin="round"/><polygon points="1108.5,348.6 1155.9,376.1 1155.9,392.8 1117.2,370.3 1108.5,362.9" fill="#d0a02a" stroke="#0a0a0a" stroke-width="1.05" stroke-linejoin="round"/>
<polygon points="927.3,435.3 973.9,410.4 1011.9,432.0 965.3,457.0" fill="#c49323" stroke="#0a0a0a" stroke-width="1.05" stroke-linejoin="round"/><polygon points="927.3,435.3 965.3,457.0 965.3,517.7 924.1,494.9 924.1,468.9 927.3,462.4" fill="#c49323" stroke="#0a0a0a" stroke-width="1.05" stroke-linejoin="round"/><polygon points="965.3,457.0 1011.9,432.0 1011.9,488.4 975.0,514.4 971.8,518.8 965.3,517.7" fill="#c49323" stroke="#0a0a0a" stroke-width="1.05" stroke-linejoin="round"/><polygon points="886.1,486.2 920.8,470.0 920.8,540.4 908.9,541.5 887.2,529.6 880.7,529.6 879.6,486.2" fill="#c49323" stroke="#0a0a0a" stroke-width="1.05" stroke-linejoin="round"/><polygon points="920.8,470.0 924.1,468.9 924.1,494.9 932.7,499.7 932.7,540.4 920.8,540.4" fill="#dda72a" stroke="#0a0a0a" stroke-width="1.05" stroke-linejoin="round"/><polyline points="887.2,488.4 919.7,505.7 919.7,540.4" fill="none" stroke="#0a0a0a" stroke-width="0.8" stroke-linejoin="round"/><polygon points="895.9,481.9 915.4,472.1 920.8,475.4 910.0,483.0 895.9,484.1" fill="#c49323" stroke="#0a0a0a" stroke-width="1.05" stroke-linejoin="round"/><polygon points="886.1,400.6 902.4,391.9 915.4,439.6 927.3,434.2 927.3,462.4 886.1,486.2" fill="#c49323" stroke="#0a0a0a" stroke-width="1.05" stroke-linejoin="round"/><polygon points="879.6,417.5 886.1,400.6 886.1,486.2 879.6,486.2" fill="#dda72a" stroke="#0a0a0a" stroke-width="1.05" stroke-linejoin="round"/><polygon points="852.5,399.5 886.1,400.6 879.6,417.5 852.5,404.7" fill="#dda72a" stroke="#0a0a0a" stroke-width="1.05" stroke-linejoin="round"/><polygon points="852.5,433.1 879.6,417.5 879.6,510.1 855.1,494.5 846.0,466.7" fill="#c49323" stroke="#0a0a0a" stroke-width="1.05" stroke-linejoin="round"/><polygon points="854.7,445.0 862.3,439.6 878.1,449.8 876.8,455.9 870.9,465.0 863.4,466.3 854.7,453.7" fill="#c49323" stroke="#0a0a0a" stroke-width="0.8" stroke-linejoin="round"/><ellipse cx="866.6" cy="455.9" rx="4.6" ry="7.2" transform="rotate(-28 866.6 455.9)" fill="#e9e9e9" stroke="#0a0a0a" stroke-width="0.8"/><ellipse cx="863.4" cy="492.7" rx="2.2" ry="3.2" transform="rotate(20 863.4 492.7)" fill="#dda72a" stroke="#0a0a0a" stroke-width="0.8"/><polyline points="915.4,439.6 927.3,434.2" fill="none" stroke="#0a0a0a" stroke-width="0.8" stroke-linejoin="round"/><polygon points="934.9,434.2 950.1,428.8 962.0,436.8 947.9,444.6" fill="#c49323" stroke="#0a0a0a" stroke-width="0.8" stroke-linejoin="round"/><polyline points="928.4,436.8 976.1,410.4" fill="none" stroke="#0a0a0a" stroke-width="2.2" stroke-linejoin="round" stroke-dasharray="1.3 1"/><polyline points="917.6,417.9 943.6,409.3" fill="none" stroke="#222" stroke-width="2.6" stroke-linejoin="round"/><polyline points="918.0,417.9 923.6,416.2" fill="none" stroke="#ddd" stroke-width="1.8" stroke-linejoin="round"/><polyline points="924.5,415.8 943.1,409.7" fill="none" stroke="#dda72a" stroke-width="1.4" stroke-linejoin="round"/><polygon points="990.4,416.2 1019.5,394.5 1004.9,386.5 1026.1,370.6 1061.9,390.5 1055.3,409.0 1027.5,432.9 1010.2,439.5" fill="#c49323" stroke="#0a0a0a" stroke-width="1.05" stroke-linejoin="round"/><polygon points="969.6,471.1 1010.8,452.6 1022.7,459.1 985.9,478.6" fill="#c49323" stroke="#0a0a0a" stroke-width="1.05" stroke-linejoin="round"/><polygon points="969.6,471.1 985.9,478.6 985.9,484.1 969.6,476.5" fill="#dda72a" stroke="#0a0a0a" stroke-width="1.05" stroke-linejoin="round"/><polygon points="985.9,478.6 1022.7,459.1 1022.7,463.5 985.9,484.1" fill="#c49323" stroke="#0a0a0a" stroke-width="1.05" stroke-linejoin="round"/><polyline points="973.7,473.0 1013.8,454.4" fill="none" stroke="#0a0a0a" stroke-width="0.7" stroke-linejoin="round"/><polyline points="977.8,475.0 1016.9,456.1" fill="none" stroke="#0a0a0a" stroke-width="0.7" stroke-linejoin="round"/><polyline points="982.0,476.9 1019.9,457.8" fill="none" stroke="#0a0a0a" stroke-width="0.7" stroke-linejoin="round"/>
<polygon points="786.1,362.9 796.1,364.9 852.2,399.4 859.7,406.1 852.2,404.8 829.8,401.8 804.8,391.1 791.1,378.6" fill="#c39426"/><polygon points="736.1,368.6 764.8,351.7 786.1,362.9 786.1,367.4 791.1,378.6 804.8,391.1 829.8,401.8 852.2,404.8 859.7,406.1 879.7,418.6 851.0,433.6" fill="#c49323" stroke="#0a0a0a" stroke-width="1.05" stroke-linejoin="round"/><polygon points="852.2,399.4 885.9,374.9 900.9,391.6 887.2,398.6" fill="#c49323" stroke="#0a0a0a" stroke-width="1.05" stroke-linejoin="round"/><polygon points="852.2,399.4 887.2,398.6 879.7,418.6 859.7,406.1" fill="#dda72a" stroke="#0a0a0a" stroke-width="1.05" stroke-linejoin="round"/><polygon points="835.9,321.9 850.4,314.7 866.3,323.4 866.3,343.6 846.1,333.5 834.5,327.7" fill="#c49323" stroke="#0a0a0a" stroke-width="0.8" stroke-linejoin="round"/><polygon points="830.9,342.5 846.1,333.5 866.3,343.6 850.4,352.3" fill="#c49323" stroke="#0a0a0a" stroke-width="0.8" stroke-linejoin="round"/><polygon points="786.0,363.2 794.7,358.8 794.7,370.8 786.8,374.3" fill="#c49323" stroke="#0a0a0a" stroke-width="0.8" stroke-linejoin="round"/><polyline points="786.3,365.9 794.7,361.7" fill="none" stroke="#0a0a0a" stroke-width="0.6" stroke-linejoin="round"/><polyline points="786.3,368.6 794.7,364.6" fill="none" stroke="#0a0a0a" stroke-width="0.6" stroke-linejoin="round"/><polyline points="786.3,371.4 794.7,367.5" fill="none" stroke="#0a0a0a" stroke-width="0.6" stroke-linejoin="round"/><polygon points="785.3,374.0 794.7,379.8 795.2,388.2 789.9,382.0" fill="#aeb6c2"/><polygon points="795.2,346.8 814.5,340.4 796.6,367.1 795.2,387.0" fill="#c49323" stroke="#0a0a0a" stroke-width="1.05" stroke-linejoin="round"/><polygon points="814.5,340.4 865.6,368.5 853.3,397.9 796.6,367.1" fill="#dda72a" stroke="#0a0a0a" stroke-width="1.05" stroke-linejoin="round"/><polygon points="865.6,368.5 885.8,376.2 853.3,397.9" fill="#c49323" stroke="#0a0a0a" stroke-width="1.05" stroke-linejoin="round"/><polygon points="814.5,340.4 817.9,339.3 886.6,374.7 885.8,376.6 865.6,368.5" fill="#4a3a10" stroke="#0a0a0a" stroke-width="0.7" stroke-linejoin="round"/>
<polygon points="648.4,446.4 679.1,433.0 705.5,407.7 727.9,418.5 691.8,449.2 666.5,456.5" fill="#dda72a" stroke="#0a0a0a" stroke-width="1.05" stroke-linejoin="round"/><polygon points="648.4,446.4 666.5,456.5 664.7,461.9 648.4,452.9" fill="#c49323" stroke="#0a0a0a" stroke-width="1.05" stroke-linejoin="round"/><polygon points="653.8,429.4 662.9,425.0 676.6,433.0 668.3,437.7" fill="#d9a42c" stroke="#0a0a0a" stroke-width="1.05" stroke-linejoin="round"/><polygon points="668.3,437.7 676.6,433.0 679.1,444.9 670.8,450.0" fill="#c49323" stroke="#0a0a0a" stroke-width="1.05" stroke-linejoin="round"/><polygon points="653.8,429.4 668.3,437.7 670.8,450.0 655.6,442.0" fill="#d21216" stroke="#0a0a0a" stroke-width="1.05" stroke-linejoin="round"/><polygon points="718.9,369.0 726.1,365.4 736.9,369.0 735.1,378.8 727.9,384.2 720.7,380.6" fill="#dda72a" stroke="#0a0a0a" stroke-width="1.05" stroke-linejoin="round"/><ellipse cx="724.3" cy="375.2" rx="4.6" ry="7" transform="rotate(-25 724.3 375.2)" fill="#ececec" stroke="#0a0a0a" stroke-width="0.8"/><polygon points="742.3,372.6 851.1,434.1 829.1,438.4 814.6,472.7 765.8,521.5 736.9,508.9 713.4,517.9 684.5,532.3 677.3,496.2 691.8,467.3" fill="#dda72a"/><polyline points="736.2,368.7 851.1,433.7" fill="none" stroke="#0a0a0a" stroke-width="0.9" stroke-linejoin="round"/><polyline points="830.9,425.8 814.6,472.7 765.8,521.5" fill="none" stroke="#0a0a0a" stroke-width="0.8" stroke-linejoin="round"/><polygon points="736.9,369.7 756.8,380.6 751.4,389.6 735.1,400.5 731.5,391.4" fill="#c49323" stroke="#0a0a0a" stroke-width="1.05" stroke-linejoin="round"/><polygon points="740.5,377.0 751.4,383.5 748.9,388.5 736.9,395.8" fill="#dda72a" stroke="#0a0a0a" stroke-width="0.8" stroke-linejoin="round"/><polyline points="756.8,380.6 729.7,434.8" fill="none" stroke="#0a0a0a" stroke-width="0.9" stroke-linejoin="round"/><polygon points="830.9,425.8 852.6,438.4 847.1,454.7 809.2,474.5 814.6,470.9" fill="#c49323" stroke="#0a0a0a" stroke-width="1.05" stroke-linejoin="round"/><polygon points="833.4,433.0 846.4,440.2 829.1,454.7 827.6,450.0" fill="#dda72a" stroke="#0a0a0a" stroke-width="0.8" stroke-linejoin="round"/><polygon points="782.8,404.1 789.3,401.5 803.1,412.4 792.9,434.1 779.2,427.6 776.7,418.5" fill="#dda72a" stroke="#0a0a0a" stroke-width="1.05" stroke-linejoin="round"/><polyline points="788.6,404.1 781.4,418.5" fill="none" stroke="#0a0a0a" stroke-width="0.7" stroke-linejoin="round"/><ellipse cx="786.8" cy="424.7" rx="2.6" ry="3.4" transform="rotate(0 786.8 424.7)" fill="#dda72a" stroke="#0a0a0a" stroke-width="0.8"/><polygon points="762.2,411.3 773.1,407.7 779.2,420.3 733.3,445.6 724.3,438.4" fill="#dda72a" stroke="#0a0a0a" stroke-width="1.05" stroke-linejoin="round"/><ellipse cx="765.8" cy="413.8" rx="4" ry="5.2" transform="rotate(0 765.8 413.8)" fill="#dda72a" stroke="#0a0a0a" stroke-width="0.8"/><polygon points="709.8,445.6 726.1,438.4 733.3,445.6 730.8,456.5 717.8,463.0 708.0,456.5" fill="#dda72a" stroke="#0a0a0a" stroke-width="1.05" stroke-linejoin="round"/><ellipse cx="712.7" cy="454.7" rx="5.6" ry="8.4" transform="rotate(-20 712.7 454.7)" fill="#dda72a" stroke="#0a0a0a" stroke-width="0.8"/><polygon points="688.1,464.4 715.6,450.0 717.8,454.7 691.8,470.2" fill="#e6e6e6" stroke="#0a0a0a" stroke-width="0.8" stroke-linejoin="round"/><polyline points="697.2,473.8 716.3,460.8 711.6,471.6" fill="none" stroke="#0a0a0a" stroke-width="0.8" stroke-linejoin="round"/>
<polygon points="672.5,525.7 709.9,527.2 740.2,541.5 742.0,533.7 766.9,509.9 778.9,522.4 731.1,561.5 710.5,581.0 672.5,564.8" fill="#dda72a" stroke="#0a0a0a" stroke-width="1.05" stroke-linejoin="round"/><polygon points="713.3,520.7 738.7,496.0 766.9,509.9 742.0,533.7" fill="#c49323" stroke="#0a0a0a" stroke-width="1.05" stroke-linejoin="round"/><polygon points="713.3,520.7 742.0,533.7 740.2,541.5 709.9,527.2" fill="#a9801f" stroke="#0a0a0a" stroke-width="1.05" stroke-linejoin="round"/><polyline points="683.4,558.9 711.6,572.3" fill="none" stroke="#0a0a0a" stroke-width="0.8" stroke-linejoin="round"/><polygon points="695.4,476.3 717.1,472.7 722.5,481.8 699.0,492.6" fill="#dda72a" stroke="#0a0a0a" stroke-width="1.05" stroke-linejoin="round"/><polygon points="736.9,389.6 751.4,384.2 753.2,393.2 684.5,465.5 661.4,491.2 591.3,595.6 574.3,584.7 635.8,489.0 670.1,454.7" fill="#dda72a" stroke="#0a0a0a" stroke-width="1.05" stroke-linejoin="round"/><polyline points="748.9,391.4 676.6,460.1 641.2,492.6 579.7,587.3" fill="none" stroke="#0a0a0a" stroke-width="0.8" stroke-linejoin="round"/><polygon points="610.5,606.4 648.4,595.6 652.0,600.3 614.1,612.6" fill="#dda72a" stroke="#0a0a0a" stroke-width="1.05" stroke-linejoin="round"/><polygon points="667.2,460.8 679.1,469.1 665.7,557.6 648.4,589.4 642.6,585.8 656.4,503.4" fill="#dda72a" stroke="#0a0a0a" stroke-width="1.05" stroke-linejoin="round"/><polygon points="682.7,510.7 735.1,485.4 742.3,484.7 746.0,491.9 714.2,512.5 710.6,523.3 691.8,525.8 683.1,522.2" fill="#dda72a" stroke="#0a0a0a" stroke-width="1.05" stroke-linejoin="round"/><polyline points="686.3,508.9 695.4,513.6 744.2,490.8" fill="none" stroke="#0a0a0a" stroke-width="0.7" stroke-linejoin="round"/><ellipse cx="690.7" cy="517.9" rx="2.6" ry="3.4" transform="rotate(0 690.7 517.9)" fill="#dda72a" stroke="#0a0a0a" stroke-width="0.8"/><polygon points="673.7,463.7 682.7,457.2 691.8,461.9 681.6,474.5 674.4,471.6" fill="#e2e2e2" stroke="#0a0a0a" stroke-width="1.05" stroke-linejoin="round"/><polygon points="680.2,467.3 691.8,463.0 697.5,469.1 698.3,478.1 688.1,530.5 675.1,598.1 668.3,608.2 661.0,604.6 661.4,590.9 677.3,503.4 678.8,481.8" fill="#dda72a" stroke="#0a0a0a" stroke-width="1.05" stroke-linejoin="round"/><polyline points="686.3,468.4 683.1,483.6 682.4,503.4 665.7,590.9 664.7,605.3" fill="none" stroke="#0a0a0a" stroke-width="0.7" stroke-linejoin="round"/><ellipse cx="691.8" cy="472.7" rx="2.6" ry="3.4" transform="rotate(0 691.8 472.7)" fill="#dda72a" stroke="#0a0a0a" stroke-width="0.8"/><ellipse cx="672.2" cy="508.1" rx="2.6" ry="3.4" transform="rotate(0 672.2 508.1)" fill="#dda72a" stroke="#0a0a0a" stroke-width="0.8"/><ellipse cx="661.0" cy="557.6" rx="2.6" ry="3.4" transform="rotate(0 661.0 557.6)" fill="#dda72a" stroke="#0a0a0a" stroke-width="0.8"/><ellipse cx="667.2" cy="601.7" rx="2.6" ry="3.4" transform="rotate(0 667.2 601.7)" fill="#dda72a" stroke="#0a0a0a" stroke-width="0.8"/><polygon points="842.0,444.0 737.0,528.0 724.0,546.0 686.0,618.0 666.8,643.3 670.6,646.5 676.5,650.5 680.3,660.3 724.6,620.1 744.1,591.9 762.2,574.0 796.2,542.0 841.7,495.5 851.5,486.0 855.0,450.0" fill="#dda72a" stroke="#0a0a0a" stroke-width="1.05" stroke-linejoin="round"/><polyline points="853.0,449.0 845.0,448.0 742.0,530.0 729.0,549.0 691.0,620.0 671.0,646.0" fill="none" stroke="#0a0a0a" stroke-width="0.8" stroke-linejoin="round"/>
<polygon points="772.6,547.9 791.1,537.1 842.0,485.1 849.6,482.9 856.6,494.8 806.7,547.5 786.3,562.7" fill="#dda72a" stroke="#0a0a0a" stroke-width="1.05" stroke-linejoin="round"/><polyline points="838.8,485.1 801.9,521.9 796.5,528.4" fill="none" stroke="#0a0a0a" stroke-width="0.7" stroke-linejoin="round"/><polygon points="833.5,556.4 860.9,541.1 866.7,537.9 870.3,563.9 860.9,569.4 860.4,556.7 847.9,563.9" fill="#c49323" stroke="#0a0a0a" stroke-width="1.05" stroke-linejoin="round"/><polyline points="860.4,541.5 860.6,569.4" fill="none" stroke="#0a0a0a" stroke-width="0.8" stroke-linejoin="round"/><polygon points="866.0,539.4 887.0,525.6 909.4,577.0 872.5,556.7" fill="#a9801f" stroke="#0a0a0a" stroke-width="1.05" stroke-linejoin="round"/><polygon points="892.0,516.2 893.7,519.9 912.5,576.2 909.4,577.2 887.0,525.6" fill="#dda72a" stroke="#0a0a0a" stroke-width="1.05" stroke-linejoin="round"/><polygon points="795.2,532.1 853.7,494.6 892.0,516.2 835.6,548.0" fill="#c49323" stroke="#0a0a0a" stroke-width="1.05" stroke-linejoin="round"/><polygon points="795.2,532.1 835.6,548.0 892.0,516.2 893.7,519.9 832.8,556.4 794.5,537.9" fill="#c49323" stroke="#0a0a0a" stroke-width="1.05" stroke-linejoin="round"/><polyline points="835.6,548.0 832.8,556.4" fill="none" stroke="#0a0a0a" stroke-width="0.8" stroke-linejoin="round"/><polygon points="821.9,525.6 829.9,522.0 843.6,529.3 835.6,533.6" fill="#d9a42c" stroke="#0a0a0a" stroke-width="1.05" stroke-linejoin="round"/><polygon points="835.6,533.6 843.6,529.3 843.9,540.8 836.1,545.9" fill="#c49323" stroke="#0a0a0a" stroke-width="1.05" stroke-linejoin="round"/><polygon points="821.9,525.6 835.6,533.6 836.1,545.9 819.7,535.8" fill="#d21216" stroke="#0a0a0a" stroke-width="1.05" stroke-linejoin="round"/><polygon points="774.9,548.6 792.9,538.9 802.0,543.2 794.7,555.8 781.4,564.9 773.1,558.4" fill="#dda72a" stroke="#0a0a0a" stroke-width="1.05" stroke-linejoin="round"/><ellipse cx="778.5" cy="556.9" rx="4.6" ry="6.6" transform="rotate(-20 778.5 556.9)" fill="#dda72a" stroke="#0a0a0a" stroke-width="0.8"/><polygon points="761.1,561.3 776.7,551.1 779.2,555.8 764.0,566.7" fill="#e6e6e6" stroke="#0a0a0a" stroke-width="0.8" stroke-linejoin="round"/><polygon points="745.2,581.1 749.6,571.4 758.6,564.1 768.4,566.7 769.8,575.7 756.8,585.8 748.9,588.4" fill="#cfcfcf" stroke="#0a0a0a" stroke-width="1.05" stroke-linejoin="round"/><ellipse cx="755.4" cy="580.0" rx="3" ry="3.8" transform="rotate(0 755.4 580.0)" fill="#efefef" stroke="#0a0a0a" stroke-width="0.8"/>
<polygon points="875.3,358.4 917.6,382.7 918.6,403.9 891.5,390.9" fill="#c49323" stroke="#0a0a0a" stroke-width="1.05" stroke-linejoin="round"/><polygon points="917.6,382.7 941.4,370.3 941.4,390.9 918.6,403.9" fill="#c49323" stroke="#0a0a0a" stroke-width="1.05" stroke-linejoin="round"/><polygon points="877.2,355.4 877.2,339.3 909.1,317.6 917.8,313.3 917.8,345.2" fill="#3a3a3a" stroke="#0a0a0a" stroke-width="0.8" stroke-linejoin="round"/><polygon points="874.2,356.2 911.1,336.7 952.2,346.5 964.8,341.1 964.8,353.0 945.7,358.4 945.7,368.2 917.6,382.7 875.3,358.4" fill="#3a3a3a" stroke="#0a0a0a" stroke-width="1.05" stroke-linejoin="round"/><polyline points="875.9,356.7 915.4,374.7 944.7,359.5" fill="none" stroke="#111" stroke-width="0.8" stroke-linejoin="round"/><polygon points="913.2,322.6 919.7,286.9 947.9,276.0 969.6,289.0 964.2,340.0 951.2,346.5" fill="#3a3a3a" stroke="#0a0a0a" stroke-width="1.05" stroke-linejoin="round"/><polyline points="947.9,276.0 958.8,293.4 951.2,346.5" fill="none" stroke="#111" stroke-width="0.8" stroke-linejoin="round"/><polyline points="963.1,285.8 956.2,340.0" fill="none" stroke="#555" stroke-width="0.7" stroke-linejoin="round"/><polygon points="875.3,341.1 881.8,342.1 876.8,368.2 870.9,366.0" fill="#c49323" stroke="#0a0a0a" stroke-width="1.05" stroke-linejoin="round"/><ellipse cx="878.5" cy="323.7" rx="28" ry="13.5" fill="none" stroke="#0a0a0a" stroke-width="6.4"/><ellipse cx="878.5" cy="323.7" rx="28" ry="13.5" fill="none" stroke="#333" stroke-width="4.6"/><polyline points="872.0,312.9 877.5,331.3 895.9,333.5" fill="none" stroke="#222" stroke-width="1.6" stroke-linejoin="round"/><polyline points="866.6,321.5 866.6,333.5" fill="none" stroke="#ddd" stroke-width="1.6" stroke-linejoin="round"/><polyline points="873.1,324.8 874.2,332.4" fill="none" stroke="#ccc" stroke-width="1.4" stroke-linejoin="round"/>
<polygon points="898.5,288.6 910.0,291.2 910.6,306.8 905.6,315.0 900.7,313.3" fill="#c49323" stroke="#0a0a0a" stroke-width="1.05" stroke-linejoin="round"/><polyline points="904.6,290.1 905.6,314.6" fill="none" stroke="#0a0a0a" stroke-width="0.7" stroke-linejoin="round"/><polyline points="1021.3,246.1 1022.3,266.1" fill="none" stroke="#e4e4e4" stroke-width="2.6" stroke-linejoin="round"/><ellipse cx="1023.6" cy="242.9" rx="10" ry="7" fill="#d9d9d9" stroke="#999" stroke-width="0.7"/><ellipse cx="1032.8" cy="296.8" rx="12.4" ry="7" fill="#8e8984" stroke="#0a0a0a" stroke-width="0.8"/><ellipse cx="1032.8" cy="292.8" rx="9.5" ry="5.4" fill="#a09b96" stroke="#0a0a0a" stroke-width="0.8"/><polygon points="1025.8,289.8 1017.8,224.9 1016.8,217.4 1020.3,197.9 1024.3,194.9 1031.3,198.9 1033.3,208.9 1029.8,222.9 1030.8,229.9 1040.3,286.8 1033.6,293.6" fill="#8e8984" stroke="#0a0a0a" stroke-width="1.05" stroke-linejoin="round"/><polyline points="1017.3,220.4 1023.6,223.9 1030.3,222.4" fill="none" stroke="#0a0a0a" stroke-width="0.8" stroke-linejoin="round"/><polyline points="1017.8,215.4 1023.8,218.4 1031.3,215.4" fill="none" stroke="#0a0a0a" stroke-width="0.8" stroke-linejoin="round"/><polyline points="1020.3,197.9 1027.3,203.7 1031.3,198.9" fill="none" stroke="#0a0a0a" stroke-width="0.8" stroke-linejoin="round"/><polyline points="1027.3,203.7 1024.1,218.4" fill="none" stroke="#555" stroke-width="0.6" stroke-linejoin="round"/><polyline points="1025.8,281.8 1032.8,286.1 1039.8,280.3" fill="none" stroke="#0a0a0a" stroke-width="0.8" stroke-linejoin="round"/><polyline points="1026.3,286.1 1033.1,290.3 1040.3,284.8" fill="none" stroke="#0a0a0a" stroke-width="0.8" stroke-linejoin="round"/><polygon points="984.4,249.9 996.9,246.1 1001.1,397.8 991.1,392.8" fill="#c49323" stroke="#0a0a0a" stroke-width="1.05" stroke-linejoin="round"/><polyline points="990.6,248.6 996.1,396.1" fill="none" stroke="#0a0a0a" stroke-width="0.7" stroke-linejoin="round"/><polygon points="986.1,352.4 990.4,352.4 992.9,379.8 986.9,382.3 980.4,378.6" fill="#dda72a" stroke="#0a0a0a" stroke-width="1.05" stroke-linejoin="round"/><polygon points="906.0,167.0 1018.4,231.1 1017.1,236.4 994.6,248.6 917.2,286.8 897.3,289.8 874.8,288.8 854.8,284.8 839.8,278.6 826.1,270.3 816.9,261.9 809.9,252.9 806.9,242.9 807.9,233.6 811.1,226.2 817.4,218.7 826.1,212.4 899.8,169.0" fill="#c49323" stroke="#0a0a0a" stroke-width="1.0" stroke-linejoin="round"/><polyline points="1004.4,457.2 1002.9,308.7 1006.1,302.9 1009.9,302.4 1023.6,311.2 1004.9,351.1" fill="none" stroke="#0a0a0a" stroke-width="4.2" stroke-linejoin="round"/><polyline points="1004.4,457.2 1002.9,308.7 1006.1,302.9 1009.9,302.4 1023.6,311.2 1004.9,351.1" fill="none" stroke="#dda72a" stroke-width="2.8" stroke-linejoin="round"/>
<polyline points="829.8,276.1 829.8,341.8" fill="none" stroke="#0a0a0a" stroke-width="3.5999999999999996" stroke-linejoin="round"/><polyline points="829.8,276.1 829.8,341.8" fill="none" stroke="#dda72a" stroke-width="2.4" stroke-linejoin="round"/><polyline points="816.1,283.6 846.1,299.3 843.6,306.1 817.4,320.3" fill="none" stroke="#0a0a0a" stroke-width="4.0" stroke-linejoin="round"/><polyline points="816.1,283.6 846.1,299.3 843.6,306.1 817.4,320.3" fill="none" stroke="#dda72a" stroke-width="2.8" stroke-linejoin="round"/><polyline points="802.9,286.1 802.9,347.3" fill="none" stroke="#0a0a0a" stroke-width="3.5999999999999996" stroke-linejoin="round"/><polyline points="802.9,286.1 802.9,347.3" fill="none" stroke="#dda72a" stroke-width="2.4" stroke-linejoin="round"/><polyline points="801.1,284.8 811.1,291.1 812.9,299.8 812.9,339.8" fill="none" stroke="#0a0a0a" stroke-width="4.0" stroke-linejoin="round"/><polyline points="801.1,284.8 811.1,291.1 812.9,299.8 812.9,339.8" fill="none" stroke="#dda72a" stroke-width="2.8" stroke-linejoin="round"/><rect x="796.1" y="254.9" width="19" height="32" rx="8.5" fill="#c49323" stroke="#0a0a0a" stroke-width="0.9" transform="rotate(-8 804.9 271.1)"/><circle cx="801.9" cy="274.1" r="3.4" fill="#dda72a" stroke="#0a0a0a" stroke-width="0.8"/>
<polyline points="892.2,389.9 891.2,345.4 895.2,340.7 902.2,341.9 910.9,346.9 921.6,343.9" fill="none" stroke="#0a0a0a" stroke-width="4.1" stroke-linejoin="round"/><polyline points="892.2,389.9 891.2,345.4 895.2,340.7 902.2,341.9 910.9,346.9 921.6,343.9" fill="none" stroke="#dda72a" stroke-width="2.8" stroke-linejoin="round"/><polyline points="893.4,366.1 914.7,354.4" fill="none" stroke="#0a0a0a" stroke-width="3.7" stroke-linejoin="round"/><polyline points="893.4,366.1 914.7,354.4" fill="none" stroke="#dda72a" stroke-width="2.4" stroke-linejoin="round"/><polyline points="934.6,351.2 970.1,372.9 974.6,379.9 974.1,467.8" fill="none" stroke="#0a0a0a" stroke-width="4.1" stroke-linejoin="round"/><polyline points="934.6,351.2 970.1,372.9 974.6,379.9 974.1,467.8" fill="none" stroke="#dda72a" stroke-width="2.8" stroke-linejoin="round"/><rect x="917.1" y="323.9" width="16" height="37" rx="7.5" fill="#c49323" stroke="#0a0a0a" stroke-width="0.9" transform="rotate(-14 925.1 342.4)"/><rect x="919.6" y="323.9" width="16" height="37" rx="7.5" fill="#dda72a" stroke="#0a0a0a" stroke-width="0.9" transform="rotate(-14 927.6 342.4)"/><ellipse cx="921.6" cy="343.9" rx="2.6" ry="3.2" transform="rotate(0 921.6 343.9)" fill="#dda72a" stroke="#0a0a0a" stroke-width="0.8"/>
<defs><linearGradient id="bk" gradientUnits="userSpaceOnUse" x1="531.8" y1="565.0" x2="499.2" y2="619.2"><stop offset="0" stop-color="#cf9b27"/><stop offset="0.1" stop-color="#dda72a"/><stop offset="0.55" stop-color="#dda72a"/><stop offset="0.85" stop-color="#cf9b27"/><stop offset="1" stop-color="#c49323"/></linearGradient><linearGradient id="bk2" gradientUnits="userSpaceOnUse" x1="654.6" y1="680.7" x2="698.0" y2="702.3"><stop offset="0" stop-color="#e2a82d"/><stop offset="0.55" stop-color="#d49e2a"/><stop offset="1" stop-color="#b98a22"/></linearGradient></defs><polygon points="669.1,646.3 678.1,655.4 690.7,669.8 698.7,684.3 699.8,696.9 694.4,711.4 681.7,727.6 665.5,740.3 647.4,750.0 632.9,758.4 625.7,755.8 654.6,659.0" fill="url(#bk2)" stroke="#0a0a0a" stroke-width="1.05" stroke-linejoin="round"/><polygon points="481.2,554.2 633.7,640.9 642.0,634.4 654.6,659.0 649.2,693.3 640.2,711.4 463.1,605.5 477.6,583.1 483.0,568.7" fill="url(#bk)" stroke="#0a0a0a" stroke-width="1.05" stroke-linejoin="round"/><polygon points="439.6,521.7 457.7,521.0 647.8,626.8 669.1,646.3 665.5,651.8 642.0,634.4 633.7,640.9 442.1,531.1" fill="#dda72a" stroke="#0a0a0a" stroke-width="1.05" stroke-linejoin="round"/><polyline points="442.1,531.1 633.7,640.9" fill="none" stroke="#0a0a0a" stroke-width="1.8" stroke-linejoin="round"/><polyline points="454.1,525.3 645.6,630.8" fill="none" stroke="#0a0a0a" stroke-width="0.7" stroke-linejoin="round"/><polygon points="640.9,632.2 665.5,651.0 669.8,651.0 655.3,659.7" fill="#dda72a" stroke="#0a0a0a" stroke-width="0.7" stroke-linejoin="round"/><polygon points="439.6,522.4 442.1,531.1 481.2,554.2 483.0,570.5 476.8,584.9 463.1,605.5 430.6,624.7 405.3,629.0 434.2,568.7" fill="#c49323" stroke="#0a0a0a" stroke-width="1.05" stroke-linejoin="round"/><polyline points="442.1,526.0 436.0,570.5 410.7,627.2" fill="none" stroke="#0a0a0a" stroke-width="0.8" stroke-linejoin="round"/><polygon points="463.1,605.5 640.2,711.4 632.9,731.3 430.6,624.7" fill="#c49323" stroke="#0a0a0a" stroke-width="1.05" stroke-linejoin="round"/><polygon points="654.6,659.0 669.1,651.8 629.3,757.3 622.1,753.7 640.2,711.4 649.2,693.3" fill="#dda72a" stroke="#0a0a0a" stroke-width="1.05" stroke-linejoin="round"/><polyline points="665.5,656.1 645.6,702.3 626.4,754.7" fill="none" stroke="#0a0a0a" stroke-width="0.8" stroke-linejoin="round"/><polygon points="430.6,624.7 632.9,731.3 629.3,757.3 604.0,745.7 419.7,637.3 405.3,629.0" fill="#c49323" stroke="#0a0a0a" stroke-width="1.05" stroke-linejoin="round"/><polyline points="422.6,630.8 629.3,742.8" fill="none" stroke="#0a0a0a" stroke-width="0.8" stroke-linejoin="round"/><polygon points="411.9,640.6 437.0,627.4 438.6,633.2 419.0,643.6" fill="#c49323" stroke="#0a0a0a" stroke-width="0.8" stroke-linejoin="round"/><polygon points="404.7,637.0 429.8,623.9 437.0,627.4 411.9,640.6" fill="#c49323" stroke="#0a0a0a" stroke-width="0.8" stroke-linejoin="round"/><polygon points="411.9,640.6 419.0,643.6 404.7,651.3" fill="#dda72a" stroke="#0a0a0a" stroke-width="0.8" stroke-linejoin="round"/><polygon points="397.6,644.2 404.7,637.0 411.9,640.6 404.7,651.3" fill="#dda72a" stroke="#0a0a0a" stroke-width="0.8" stroke-linejoin="round"/><polygon points="446.4,660.9 471.4,647.7 473.1,653.5 453.4,663.9" fill="#c49323" stroke="#0a0a0a" stroke-width="0.8" stroke-linejoin="round"/><polygon points="439.2,657.2 464.2,644.2 471.4,647.7 446.4,660.9" fill="#c49323" stroke="#0a0a0a" stroke-width="0.8" stroke-linejoin="round"/><polygon points="446.4,660.9 453.4,663.9 439.2,671.6" fill="#dda72a" stroke="#0a0a0a" stroke-width="0.8" stroke-linejoin="round"/><polygon points="432.1,664.5 439.2,657.2 446.4,660.9 439.2,671.6" fill="#dda72a" stroke="#0a0a0a" stroke-width="0.8" stroke-linejoin="round"/><polygon points="480.8,681.1 505.9,667.9 507.5,673.7 487.9,684.1" fill="#c49323" stroke="#0a0a0a" stroke-width="0.8" stroke-linejoin="round"/><polygon points="473.6,677.5 498.7,664.4 505.9,667.9 480.8,681.1" fill="#c49323" stroke="#0a0a0a" stroke-width="0.8" stroke-linejoin="round"/><polygon points="480.8,681.1 487.9,684.1 473.6,691.8" fill="#dda72a" stroke="#0a0a0a" stroke-width="0.8" stroke-linejoin="round"/><polygon points="466.5,684.7 473.6,677.5 480.8,681.1 473.6,691.8" fill="#dda72a" stroke="#0a0a0a" stroke-width="0.8" stroke-linejoin="round"/><polygon points="515.2,701.4 540.4,688.2 542.0,694.0 522.4,704.4" fill="#c49323" stroke="#0a0a0a" stroke-width="0.8" stroke-linejoin="round"/><polygon points="508.1,697.8 533.2,684.7 540.4,688.2 515.2,701.4" fill="#c49323" stroke="#0a0a0a" stroke-width="0.8" stroke-linejoin="round"/><polygon points="515.2,701.4 522.4,704.4 508.1,712.1" fill="#dda72a" stroke="#0a0a0a" stroke-width="0.8" stroke-linejoin="round"/><polygon points="501.0,705.0 508.1,697.8 515.2,701.4 508.1,712.1" fill="#dda72a" stroke="#0a0a0a" stroke-width="0.8" stroke-linejoin="round"/><polygon points="549.7,721.6 574.8,708.4 576.4,714.2 556.8,724.6" fill="#c49323" stroke="#0a0a0a" stroke-width="0.8" stroke-linejoin="round"/><polygon points="542.5,718.0 567.6,704.9 574.8,708.4 549.7,721.6" fill="#c49323" stroke="#0a0a0a" stroke-width="0.8" stroke-linejoin="round"/><polygon points="549.7,721.6 556.8,724.6 542.5,732.3" fill="#dda72a" stroke="#0a0a0a" stroke-width="0.8" stroke-linejoin="round"/><polygon points="535.4,725.2 542.5,718.0 549.7,721.6 542.5,732.3" fill="#dda72a" stroke="#0a0a0a" stroke-width="0.8" stroke-linejoin="round"/><polygon points="584.1,741.9 609.2,728.7 610.9,734.5 591.2,744.9" fill="#c49323" stroke="#0a0a0a" stroke-width="0.8" stroke-linejoin="round"/><polygon points="577.0,738.2 602.1,725.2 609.2,728.7 584.1,741.9" fill="#c49323" stroke="#0a0a0a" stroke-width="0.8" stroke-linejoin="round"/><polygon points="584.1,741.9 591.2,744.9 577.0,752.6" fill="#dda72a" stroke="#0a0a0a" stroke-width="0.8" stroke-linejoin="round"/><polygon points="569.9,745.5 577.0,738.2 584.1,741.9 577.0,752.6" fill="#dda72a" stroke="#0a0a0a" stroke-width="0.8" stroke-linejoin="round"/><polygon points="618.6,762.1 643.7,748.9 645.3,754.7 625.7,765.1" fill="#c49323" stroke="#0a0a0a" stroke-width="0.8" stroke-linejoin="round"/><polygon points="611.4,758.5 636.5,745.4 643.7,748.9 618.6,762.1" fill="#c49323" stroke="#0a0a0a" stroke-width="0.8" stroke-linejoin="round"/><polygon points="618.6,762.1 625.7,765.1 611.4,772.8" fill="#dda72a" stroke="#0a0a0a" stroke-width="0.8" stroke-linejoin="round"/><polygon points="604.3,765.7 611.4,758.5 618.6,762.1 611.4,772.8" fill="#dda72a" stroke="#0a0a0a" stroke-width="0.8" stroke-linejoin="round"/><polygon points="622.8,754.7 631.1,759.4 647.4,751.1 648.1,746.4 632.9,752.9 625.7,749.3" fill="#dda72a" stroke="#0a0a0a" stroke-width="1.05" stroke-linejoin="round"/>
<ellipse cx="789.3" cy="633.0" rx="82.7" ry="47.7" transform="rotate(-60 789.3 633.0)" fill="#3b3b3b"/><polygon points="747.9,704.6 785.2,726.1 867.8,582.9 830.6,561.4" fill="#3b3b3b"/><ellipse cx="826.5" cy="654.5" rx="80.8" ry="46.7" transform="rotate(-60 826.5 654.5)" fill="#3b3b3b"/><path d="M855.3 577.1L872.0 587.9M850.9 573.8L867.8 584.4M845.9 571.5L863.0 581.8M840.5 570.1L857.8 580.2M834.7 569.7L852.1 579.5M828.5 570.3L846.0 579.9M822.1 571.9L839.7 581.2M815.5 574.4L833.2 583.5M808.8 577.9L826.6 586.7M802.2 582.3L820.0 590.8M795.6 587.5L813.4 595.7M789.2 593.4L807.0 601.4M783.1 600.0L800.9 607.8M777.3 607.3L795.0 614.9M772.0 615.0L789.6 622.4M767.1 623.1L784.7 630.3M762.8 631.5L780.2 638.6M759.2 640.0L776.4 647.1M756.2 648.6L773.3 655.6M753.8 657.2L770.8 664.2M752.3 665.6L769.1 672.6M751.5 673.7L768.0 680.7M751.4 681.5L767.8 688.5M752.1 688.7L768.3 695.8M753.6 695.4L769.6 702.6M755.8 701.4L771.6 708.7M758.8 706.6L774.3 714.1M762.4 711.0L777.8 718.7M766.6 714.6L781.8 722.5M771.4 717.2L786.4 725.3M776.7 718.8L791.5 727.2" stroke="#121212" stroke-width="0.9" fill="none"/><path d="M856.3 578.1L853.2 575.4L849.7 573.2L846.0 571.5L842.0 570.4L837.7 569.8L833.2 569.8L828.6 570.3L823.8 571.4L818.9 573.0L813.9 575.2L808.9 577.9L803.9 581.1L798.9 584.7L794.1 588.8L789.3 593.3L784.7 598.3L780.2 603.5L776.0 609.1L772.0 614.9L768.3 620.9L765.0 627.1L761.9 633.5L759.2 639.9L756.9 646.4L754.9 652.8L753.4 659.2L752.3 665.5L751.6 671.7L751.3 677.6L751.5 683.3L752.1 688.7L753.2 693.7L754.6 698.4L756.5 702.7L758.7 706.6L761.4 710.0L764.4 712.9L767.7 715.3L771.3 717.2L775.3 718.5" stroke="#121212" stroke-width="1" fill="none"/><path d="M836.9 565.5L854.5 574.8M843.9 569.2L861.7 579.4M825.1 558.4L841.9 569.1M830.1 566.1L848.4 575.2M810.4 557.3L826.6 569.6M814.2 569.3L832.7 577.3M793.9 562.5L809.9 576.3M797.4 578.4L816.0 585.5M777.0 573.6L793.1 588.6M781.2 592.8L799.6 599.0M761.2 589.5L777.7 605.5M766.9 611.1L784.8 616.7M747.6 609.0L764.9 625.7M755.6 632.0L773.0 637.3M737.5 630.4L755.8 647.4M748.4 653.6L765.0 658.9M731.7 652.1L751.1 668.8M745.7 674.3L761.5 679.9M730.6 672.2L751.1 688.3M747.9 692.3L762.8 698.4M734.3 689.1L756.0 704.2M754.6 706.1L768.8 713.1M742.5 701.4L765.3 715.1M765.5 714.6L779.0 722.5M754.6 708.0L778.2 720.3M779.6 717.0L792.6 726.1" stroke="#121212" stroke-width="9.6" fill="none" stroke-linecap="round"/><path d="M836.9 565.5L854.5 574.8M843.9 569.2L861.7 579.4M825.1 558.4L841.9 569.1M830.1 566.1L848.4 575.2M810.4 557.3L826.6 569.6M814.2 569.3L832.7 577.3M793.9 562.5L809.9 576.3M797.4 578.4L816.0 585.5M777.0 573.6L793.1 588.6M781.2 592.8L799.6 599.0M761.2 589.5L777.7 605.5M766.9 611.1L784.8 616.7M747.6 609.0L764.9 625.7M755.6 632.0L773.0 637.3M737.5 630.4L755.8 647.4M748.4 653.6L765.0 658.9M731.7 652.1L751.1 668.8M745.7 674.3L761.5 679.9M730.6 672.2L751.1 688.3M747.9 692.3L762.8 698.4M734.3 689.1L756.0 704.2M754.6 706.1L768.8 713.1M742.5 701.4L765.3 715.1M765.5 714.6L779.0 722.5M754.6 708.0L778.2 720.3M779.6 717.0L792.6 726.1" stroke="#3e3e3e" stroke-width="8.0" fill="none" stroke-linecap="round"/><path d="M820.4 593.0L820.4 582.7M808.4 601.6L806.3 592.9M797.1 613.1L792.9 606.4M787.1 626.8L781.2 622.5M779.1 641.9L771.8 640.3M773.5 657.5L765.1 658.7M770.6 672.8L761.7 676.7M770.6 686.8L761.7 693.1M773.5 698.7L765.1 707.2M779.1 707.8L771.8 717.9M787.1 713.6L781.2 724.8M797.1 715.8L792.9 727.3M808.4 714.3L806.3 725.5M820.4 709.0L820.4 719.3M832.5 700.4L834.6 709.1M843.8 688.9L847.9 695.6M853.7 675.2L859.7 679.5M861.8 660.1L869.1 661.7M867.4 644.5L875.7 643.3M870.3 629.2L879.2 625.3M870.3 615.2L879.2 608.9M867.4 603.3L875.7 594.8M861.8 594.2L869.1 584.1M853.7 588.4L859.7 577.2M843.8 586.2L847.9 574.7M832.5 587.7L834.6 576.5" stroke="#0e0e0e" stroke-width="7.4" fill="none"/><path d="M820.4 593.0L820.4 582.7M808.4 601.6L806.3 592.9M797.1 613.1L792.9 606.4M787.1 626.8L781.2 622.5M779.1 641.9L771.8 640.3M773.5 657.5L765.1 658.7M770.6 672.8L761.7 676.7M770.6 686.8L761.7 693.1M773.5 698.7L765.1 707.2M779.1 707.8L771.8 717.9M787.1 713.6L781.2 724.8M797.1 715.8L792.9 727.3M808.4 714.3L806.3 725.5M820.4 709.0L820.4 719.3M832.5 700.4L834.6 709.1M843.8 688.9L847.9 695.6M853.7 675.2L859.7 679.5M861.8 660.1L869.1 661.7M867.4 644.5L875.7 643.3M870.3 629.2L879.2 625.3M870.3 615.2L879.2 608.9M867.4 603.3L875.7 594.8M861.8 594.2L869.1 584.1M853.7 588.4L859.7 577.2M843.8 586.2L847.9 574.7M832.5 587.7L834.6 576.5" stroke="#3d3d3d" stroke-width="5.8" fill="none"/><ellipse cx="823.9" cy="653.0" rx="74.7" ry="43.1" transform="rotate(-60 823.9 653.0)" fill="#3a3a3a"/><path d="M822.2 588.5L824.6 600.2M814.3 593.7L817.8 605.0M806.7 600.0L811.1 610.8M799.3 607.4L804.8 617.5M792.4 615.7L798.9 625.0M786.2 624.8L793.6 633.0M780.6 634.4L788.9 641.5M775.9 644.4L785.1 650.3M772.1 654.5L782.0 659.2M769.4 664.6L779.9 667.9M767.7 674.4L778.7 676.4M767.2 683.8L778.5 684.4M767.7 692.5L779.2 691.9M769.4 700.4L781.0 698.5M772.1 707.3L783.6 704.3M775.9 713.0L787.1 709.1M780.6 717.6L791.5 712.7M786.2 720.8L796.5 715.2M792.4 722.6L802.2 716.4M799.3 723.0L808.3 716.4M806.7 721.9L814.8 715.1M814.3 719.4L821.6 712.6M822.2 715.5L828.4 708.8M830.0 710.3L835.2 704.0M837.7 704.0L841.9 698.2M845.0 696.6L848.2 691.5M851.9 688.3L854.1 684.0M858.2 679.2L859.4 676.0M863.7 669.6L864.1 667.5M868.4 659.6L867.9 658.7M872.2 649.5L871.0 649.8M874.9 639.4L873.1 641.1M876.6 629.6L874.3 632.6M877.2 620.2L874.5 624.6M876.6 611.5L873.8 617.1M874.9 603.6L872.0 610.5M872.2 596.7L869.4 604.7M868.4 591.0L865.9 599.9M863.7 586.4L861.5 596.3M858.2 583.2L856.5 593.8M851.9 581.4L850.8 592.6M845.0 581.0L844.7 592.6M837.7 582.1L838.2 593.9M830.0 584.6L831.4 596.4" stroke="#141414" stroke-width="0.9" fill="none"/><ellipse cx="826.5" cy="654.5" rx="68.0" ry="39.2" transform="rotate(-60 826.5 654.5)" fill="#3a3a3a" stroke="#0a0a0a" stroke-width="1.0"/><ellipse cx="826.5" cy="654.5" rx="56.9" ry="32.9" transform="rotate(-60 826.5 654.5)" fill="#3b3b3b" stroke="#0a0a0a" stroke-width="1.0"/><ellipse cx="826.5" cy="654.5" rx="47.8" ry="27.6" transform="rotate(-60 826.5 654.5)" fill="#383838" stroke="#0a0a0a" stroke-width="0.9"/><clipPath id="wc2"><ellipse cx="826.5" cy="654.5" rx="41.0" ry="23.7" transform="rotate(-60 826.5 654.5)"/></clipPath><ellipse cx="826.5" cy="654.5" rx="42.9" ry="24.7" transform="rotate(-60 826.5 654.5)" fill="#7a7570" stroke="#0a0a0a" stroke-width="1.0"/><g clip-path="url(#wc2)"><ellipse cx="826.5" cy="654.5" rx="41.6" ry="24.0" transform="rotate(-60 826.5 654.5)" fill="#a39e98"/><ellipse cx="823.0" cy="652.5" rx="39.2" ry="22.6" transform="rotate(-60 823.0 652.5)" fill="#9b9690" stroke="#0a0a0a" stroke-width="0.7"/><ellipse cx="819.6" cy="650.5" rx="36.7" ry="21.2" transform="rotate(-60 819.6 650.5)" fill="#96918b" stroke="#0a0a0a" stroke-width="0.7"/><ellipse cx="816.1" cy="648.5" rx="34.3" ry="19.8" transform="rotate(-60 816.1 648.5)" fill="#8f8a85" stroke="#0a0a0a" stroke-width="0.7"/><ellipse cx="814.4" cy="647.5" rx="31.8" ry="18.4" transform="rotate(-60 814.4 647.5)" fill="#8a8580" stroke="#0a0a0a" stroke-width="0.8"/><ellipse cx="814.4" cy="647.5" rx="21.4" ry="12.4" transform="rotate(-60 814.4 647.5)" fill="#85807b" stroke="#0a0a0a" stroke-width="0.7"/><ellipse cx="811.2" cy="637.4" rx="2.6" ry="1.5" transform="rotate(-60 811.2 637.4)" fill="#6f6a66" stroke="#0a0a0a" stroke-width="0.6"/><ellipse cx="804.8" cy="647.2" rx="2.6" ry="1.5" transform="rotate(-60 804.8 647.2)" fill="#6f6a66" stroke="#0a0a0a" stroke-width="0.6"/><ellipse cx="804.0" cy="657.2" rx="2.6" ry="1.5" transform="rotate(-60 804.0 657.2)" fill="#6f6a66" stroke="#0a0a0a" stroke-width="0.6"/><ellipse cx="809.3" cy="661.5" rx="2.6" ry="1.5" transform="rotate(-60 809.3 661.5)" fill="#6f6a66" stroke="#0a0a0a" stroke-width="0.6"/><ellipse cx="817.6" cy="657.6" rx="2.6" ry="1.5" transform="rotate(-60 817.6 657.6)" fill="#6f6a66" stroke="#0a0a0a" stroke-width="0.6"/><ellipse cx="824.0" cy="647.8" rx="2.6" ry="1.5" transform="rotate(-60 824.0 647.8)" fill="#6f6a66" stroke="#0a0a0a" stroke-width="0.6"/><ellipse cx="824.7" cy="637.8" rx="2.6" ry="1.5" transform="rotate(-60 824.7 637.8)" fill="#6f6a66" stroke="#0a0a0a" stroke-width="0.6"/><ellipse cx="819.4" cy="633.5" rx="2.6" ry="1.5" transform="rotate(-60 819.4 633.5)" fill="#6f6a66" stroke="#0a0a0a" stroke-width="0.6"/><ellipse cx="817.0" cy="649.0" rx="8.6" ry="4.9" transform="rotate(-60 817.0 649.0)" fill="#908b86" stroke="#0a0a0a" stroke-width="0.8"/><ellipse cx="818.7" cy="650.0" rx="4.9" ry="2.8" transform="rotate(-60 818.7 650.0)" fill="#7d7873" stroke="#0a0a0a" stroke-width="0.7"/></g><ellipse cx="826.5" cy="654.5" rx="41.0" ry="23.7" transform="rotate(-60 826.5 654.5)" fill="none" stroke="#0a0a0a" stroke-width="0.9"/><ellipse cx="1050.3" cy="485.5" rx="82.7" ry="47.7" transform="rotate(-60 1050.3 485.5)" fill="#3b3b3b"/><polygon points="1008.9,557.1 1046.2,578.6 1128.8,435.4 1091.6,413.9" fill="#3b3b3b"/><ellipse cx="1087.5" cy="507.0" rx="80.8" ry="46.7" transform="rotate(-60 1087.5 507.0)" fill="#3b3b3b"/><path d="M1116.3 429.6L1133.0 440.4M1111.9 426.3L1128.8 436.9M1106.9 424.0L1124.0 434.3M1101.5 422.6L1118.8 432.7M1095.7 422.2L1113.1 432.0M1089.5 422.8L1107.0 432.4M1083.1 424.4L1100.7 433.7M1076.5 426.9L1094.2 436.0M1069.8 430.4L1087.6 439.2M1063.2 434.8L1081.0 443.3M1056.6 440.0L1074.4 448.2M1050.2 445.9L1068.0 453.9M1044.1 452.5L1061.9 460.3M1038.3 459.8L1056.0 467.4M1033.0 467.5L1050.6 474.9M1028.1 475.6L1045.7 482.8M1023.8 484.0L1041.2 491.1M1020.2 492.5L1037.4 499.6M1017.2 501.1L1034.3 508.1M1014.8 509.7L1031.8 516.7M1013.3 518.1L1030.1 525.1M1012.5 526.2L1029.0 533.2M1012.4 534.0L1028.8 541.0M1013.1 541.2L1029.3 548.3M1014.6 547.9L1030.6 555.1M1016.8 553.9L1032.6 561.2M1019.8 559.1L1035.3 566.6M1023.4 563.5L1038.8 571.2M1027.6 567.1L1042.8 575.0M1032.4 569.7L1047.4 577.8M1037.7 571.3L1052.5 579.7" stroke="#121212" stroke-width="0.9" fill="none"/><path d="M1117.3 430.6L1114.2 427.9L1110.7 425.7L1107.0 424.0L1103.0 422.9L1098.7 422.3L1094.2 422.3L1089.6 422.8L1084.8 423.9L1079.9 425.5L1074.9 427.7L1069.9 430.4L1064.9 433.6L1059.9 437.2L1055.1 441.3L1050.3 445.8L1045.7 450.8L1041.2 456.0L1037.0 461.6L1033.0 467.4L1029.3 473.4L1026.0 479.6L1022.9 486.0L1020.2 492.4L1017.9 498.9L1015.9 505.3L1014.4 511.7L1013.3 518.0L1012.6 524.2L1012.3 530.1L1012.5 535.8L1013.1 541.2L1014.2 546.2L1015.6 550.9L1017.5 555.2L1019.7 559.1L1022.4 562.5L1025.4 565.4L1028.7 567.8L1032.3 569.7L1036.3 571.0" stroke="#121212" stroke-width="1" fill="none"/><path d="M1097.9 418.0L1115.5 427.3M1104.9 421.7L1122.7 431.9M1086.1 410.9L1102.9 421.6M1091.1 418.6L1109.4 427.7M1071.4 409.8L1087.6 422.1M1075.2 421.8L1093.7 429.8M1054.9 415.0L1070.9 428.8M1058.4 430.9L1077.0 438.0M1038.0 426.1L1054.1 441.1M1042.2 445.3L1060.6 451.5M1022.2 442.0L1038.7 458.0M1027.9 463.6L1045.8 469.2M1008.6 461.5L1025.9 478.2M1016.6 484.5L1034.0 489.8M998.5 482.9L1016.8 499.9M1009.4 506.1L1026.0 511.4M992.7 504.6L1012.1 521.3M1006.7 526.8L1022.5 532.4M991.6 524.7L1012.1 540.8M1008.9 544.8L1023.8 550.9M995.3 541.6L1017.0 556.7M1015.6 558.6L1029.8 565.6M1003.5 553.9L1026.3 567.6M1026.5 567.1L1040.0 575.0M1015.6 560.5L1039.2 572.8M1040.6 569.5L1053.6 578.6" stroke="#121212" stroke-width="9.6" fill="none" stroke-linecap="round"/><path d="M1097.9 418.0L1115.5 427.3M1104.9 421.7L1122.7 431.9M1086.1 410.9L1102.9 421.6M1091.1 418.6L1109.4 427.7M1071.4 409.8L1087.6 422.1M1075.2 421.8L1093.7 429.8M1054.9 415.0L1070.9 428.8M1058.4 430.9L1077.0 438.0M1038.0 426.1L1054.1 441.1M1042.2 445.3L1060.6 451.5M1022.2 442.0L1038.7 458.0M1027.9 463.6L1045.8 469.2M1008.6 461.5L1025.9 478.2M1016.6 484.5L1034.0 489.8M998.5 482.9L1016.8 499.9M1009.4 506.1L1026.0 511.4M992.7 504.6L1012.1 521.3M1006.7 526.8L1022.5 532.4M991.6 524.7L1012.1 540.8M1008.9 544.8L1023.8 550.9M995.3 541.6L1017.0 556.7M1015.6 558.6L1029.8 565.6M1003.5 553.9L1026.3 567.6M1026.5 567.1L1040.0 575.0M1015.6 560.5L1039.2 572.8M1040.6 569.5L1053.6 578.6" stroke="#3e3e3e" stroke-width="8.0" fill="none" stroke-linecap="round"/><path d="M1081.4 445.5L1081.4 435.2M1069.4 454.1L1067.3 445.4M1058.1 465.6L1053.9 458.9M1048.1 479.3L1042.2 475.0M1040.1 494.4L1032.8 492.8M1034.5 510.0L1026.1 511.2M1031.6 525.3L1022.7 529.2M1031.6 539.3L1022.7 545.6M1034.5 551.2L1026.1 559.7M1040.1 560.3L1032.8 570.4M1048.1 566.1L1042.2 577.3M1058.1 568.3L1053.9 579.8M1069.4 566.8L1067.3 578.0M1081.4 561.5L1081.4 571.8M1093.5 552.9L1095.6 561.6M1104.8 541.4L1108.9 548.1M1114.7 527.7L1120.7 532.0M1122.8 512.6L1130.1 514.2M1128.4 497.0L1136.7 495.8M1131.3 481.7L1140.2 477.8M1131.3 467.7L1140.2 461.4M1128.4 455.8L1136.7 447.3M1122.8 446.7L1130.1 436.6M1114.7 440.9L1120.7 429.7M1104.8 438.7L1108.9 427.2M1093.5 440.2L1095.6 429.0" stroke="#0e0e0e" stroke-width="7.4" fill="none"/><path d="M1081.4 445.5L1081.4 435.2M1069.4 454.1L1067.3 445.4M1058.1 465.6L1053.9 458.9M1048.1 479.3L1042.2 475.0M1040.1 494.4L1032.8 492.8M1034.5 510.0L1026.1 511.2M1031.6 525.3L1022.7 529.2M1031.6 539.3L1022.7 545.6M1034.5 551.2L1026.1 559.7M1040.1 560.3L1032.8 570.4M1048.1 566.1L1042.2 577.3M1058.1 568.3L1053.9 579.8M1069.4 566.8L1067.3 578.0M1081.4 561.5L1081.4 571.8M1093.5 552.9L1095.6 561.6M1104.8 541.4L1108.9 548.1M1114.7 527.7L1120.7 532.0M1122.8 512.6L1130.1 514.2M1128.4 497.0L1136.7 495.8M1131.3 481.7L1140.2 477.8M1131.3 467.7L1140.2 461.4M1128.4 455.8L1136.7 447.3M1122.8 446.7L1130.1 436.6M1114.7 440.9L1120.7 429.7M1104.8 438.7L1108.9 427.2M1093.5 440.2L1095.6 429.0" stroke="#3d3d3d" stroke-width="5.8" fill="none"/><ellipse cx="1084.9" cy="505.5" rx="74.7" ry="43.1" transform="rotate(-60 1084.9 505.5)" fill="#3a3a3a"/><path d="M1083.2 441.0L1085.6 452.7M1075.3 446.2L1078.8 457.5M1067.7 452.5L1072.1 463.3M1060.3 459.9L1065.8 470.0M1053.4 468.2L1059.9 477.5M1047.2 477.3L1054.6 485.5M1041.6 486.9L1049.9 494.0M1036.9 496.9L1046.1 502.8M1033.1 507.0L1043.0 511.7M1030.4 517.1L1040.9 520.4M1028.7 526.9L1039.7 528.9M1028.2 536.2L1039.5 536.9M1028.7 545.0L1040.2 544.4M1030.4 552.9L1042.0 551.0M1033.1 559.8L1044.6 556.8M1036.9 565.5L1048.1 561.6M1041.6 570.1L1052.5 565.2M1047.2 573.3L1057.5 567.7M1053.4 575.1L1063.2 568.9M1060.3 575.5L1069.3 568.9M1067.7 574.4L1075.8 567.6M1075.3 571.9L1082.6 565.1M1083.2 568.0L1089.4 561.3M1091.0 562.8L1096.2 556.5M1098.7 556.5L1102.9 550.7M1106.0 549.1L1109.2 544.0M1112.9 540.8L1115.1 536.5M1119.2 531.7L1120.4 528.5M1124.7 522.1L1125.1 520.0M1129.4 512.1L1128.9 511.2M1133.2 502.0L1132.0 502.3M1135.9 491.9L1134.1 493.6M1137.6 482.1L1135.3 485.1M1138.2 472.8L1135.5 477.1M1137.6 464.0L1134.8 469.6M1135.9 456.1L1133.0 463.0M1133.2 449.2L1130.4 457.2M1129.4 443.5L1126.9 452.4M1124.7 438.9L1122.5 448.8M1119.2 435.7L1117.5 446.3M1112.9 433.9L1111.8 445.1M1106.0 433.5L1105.7 445.1M1098.7 434.6L1099.2 446.4M1091.0 437.1L1092.4 448.9" stroke="#141414" stroke-width="0.9" fill="none"/><ellipse cx="1087.5" cy="507.0" rx="68.0" ry="39.2" transform="rotate(-60 1087.5 507.0)" fill="#3a3a3a" stroke="#0a0a0a" stroke-width="1.0"/><ellipse cx="1087.5" cy="507.0" rx="56.9" ry="32.9" transform="rotate(-60 1087.5 507.0)" fill="#3b3b3b" stroke="#0a0a0a" stroke-width="1.0"/><ellipse cx="1087.5" cy="507.0" rx="47.8" ry="27.6" transform="rotate(-60 1087.5 507.0)" fill="#383838" stroke="#0a0a0a" stroke-width="0.9"/><clipPath id="wc3"><ellipse cx="1087.5" cy="507.0" rx="41.0" ry="23.7" transform="rotate(-60 1087.5 507.0)"/></clipPath><ellipse cx="1087.5" cy="507.0" rx="42.9" ry="24.7" transform="rotate(-60 1087.5 507.0)" fill="#7a7570" stroke="#0a0a0a" stroke-width="1.0"/><g clip-path="url(#wc3)"><ellipse cx="1087.5" cy="507.0" rx="41.6" ry="24.0" transform="rotate(-60 1087.5 507.0)" fill="#a39e98"/><ellipse cx="1084.0" cy="505.0" rx="39.2" ry="22.6" transform="rotate(-60 1084.0 505.0)" fill="#9b9690" stroke="#0a0a0a" stroke-width="0.7"/><ellipse cx="1080.6" cy="503.0" rx="36.7" ry="21.2" transform="rotate(-60 1080.6 503.0)" fill="#96918b" stroke="#0a0a0a" stroke-width="0.7"/><ellipse cx="1077.1" cy="501.0" rx="34.3" ry="19.8" transform="rotate(-60 1077.1 501.0)" fill="#8f8a85" stroke="#0a0a0a" stroke-width="0.7"/><ellipse cx="1075.4" cy="500.0" rx="31.8" ry="18.4" transform="rotate(-60 1075.4 500.0)" fill="#8a8580" stroke="#0a0a0a" stroke-width="0.8"/><ellipse cx="1075.4" cy="500.0" rx="21.4" ry="12.4" transform="rotate(-60 1075.4 500.0)" fill="#85807b" stroke="#0a0a0a" stroke-width="0.7"/><ellipse cx="1072.2" cy="489.9" rx="2.6" ry="1.5" transform="rotate(-60 1072.2 489.9)" fill="#6f6a66" stroke="#0a0a0a" stroke-width="0.6"/><ellipse cx="1065.8" cy="499.7" rx="2.6" ry="1.5" transform="rotate(-60 1065.8 499.7)" fill="#6f6a66" stroke="#0a0a0a" stroke-width="0.6"/><ellipse cx="1065.0" cy="509.7" rx="2.6" ry="1.5" transform="rotate(-60 1065.0 509.7)" fill="#6f6a66" stroke="#0a0a0a" stroke-width="0.6"/><ellipse cx="1070.3" cy="514.0" rx="2.6" ry="1.5" transform="rotate(-60 1070.3 514.0)" fill="#6f6a66" stroke="#0a0a0a" stroke-width="0.6"/><ellipse cx="1078.6" cy="510.1" rx="2.6" ry="1.5" transform="rotate(-60 1078.6 510.1)" fill="#6f6a66" stroke="#0a0a0a" stroke-width="0.6"/><ellipse cx="1085.0" cy="500.3" rx="2.6" ry="1.5" transform="rotate(-60 1085.0 500.3)" fill="#6f6a66" stroke="#0a0a0a" stroke-width="0.6"/><ellipse cx="1085.7" cy="490.3" rx="2.6" ry="1.5" transform="rotate(-60 1085.7 490.3)" fill="#6f6a66" stroke="#0a0a0a" stroke-width="0.6"/><ellipse cx="1080.4" cy="486.0" rx="2.6" ry="1.5" transform="rotate(-60 1080.4 486.0)" fill="#6f6a66" stroke="#0a0a0a" stroke-width="0.6"/><ellipse cx="1078.0" cy="501.5" rx="8.6" ry="4.9" transform="rotate(-60 1078.0 501.5)" fill="#908b86" stroke="#0a0a0a" stroke-width="0.8"/><ellipse cx="1079.7" cy="502.5" rx="4.9" ry="2.8" transform="rotate(-60 1079.7 502.5)" fill="#7d7873" stroke="#0a0a0a" stroke-width="0.7"/></g><ellipse cx="1087.5" cy="507.0" rx="41.0" ry="23.7" transform="rotate(-60 1087.5 507.0)" fill="none" stroke="#0a0a0a" stroke-width="0.9"/>
<polygon points="1010.2,439.5 1028.8,432.1 1019.5,448.8 994.3,505.2 991.9,497.8" fill="#dda72a" stroke="#0a0a0a" stroke-width="1.05" stroke-linejoin="round"/>
</g>
<g><path d="M363.5 755.5V731" stroke="#12c020" stroke-width="3.2"/><path d="M359.5 733.5L363.5 726.5L367.5 733.5z" fill="#12c020"/><path d="M363.5 755.5L382 766" stroke="#d01822" stroke-width="3.2"/><path d="M381.6 761.2L388 769L378 769.2z" fill="#d01822"/><path d="M363.5 755.5L346 765.5" stroke="#1010d8" stroke-width="3.2"/><path d="M346.5 761.2L339 769.2L349.5 768.6z" fill="#1010d8"/><circle cx="363.5" cy="755.5" r="1.8" fill="#e8e8e8"/><g font-family="Liberation Serif,serif" font-size="11.5" fill="#555"><text x="362" y="725.5">Y</text><text x="390" y="770">X</text><text x="335" y="770">Z</text></g></g>
<g stroke="none"><polygon points="1179.5,164.5 1219.5,187.5 1179.5,208.5 1139.5,187.5" fill="#b4b4b4"/><polygon points="1139.5,187.5 1179.5,208.5 1179.5,254.0 1139.5,231.0" fill="#b7b7b7"/><polygon points="1179.5,208.5 1219.5,187.5 1219.5,231.0 1179.5,254.0" fill="#b3b3b3"/><polygon points="1139.5,187.5 1143.5,185.4 1179.5,203.5 1179.5,213.5 1175.5,214.5 1139.5,191.5" fill="#d9d9d9"/><polygon points="1219.5,187.5 1215.5,185.4 1179.5,203.5 1179.5,213.5 1183.5,214.5 1219.5,191.5" fill="#d4d4d4"/><polygon points="1175.5,212.5 1179.5,205.5 1183.5,212.5 1183.5,252.0 1179.5,254.0 1175.5,252.0" fill="#dcdcdc"/><polygon points="1175.0,213.5 1179.5,203.5 1184.0,213.5" fill="#ececec"/><g font-family="Liberation Sans,sans-serif" font-size="6.6" fill="#777"><text transform="translate(1172,180) rotate(30) skewX(-20)">Top</text><text transform="translate(1146,217.500) rotate(27) skewX(0)">Front</text><text transform="translate(1195,228) rotate(-27)">Right</text></g></g>
<g fill="#fff" stroke="#5a5a5a" stroke-width="1.1"><circle cx="708.300" cy="145.300" r="8.700"/><path d="M714.500 151.500l5 5" fill="none" stroke-width="1.300"/><path d="M703.500 143.800v-3.500h3.500M709.800 140.300h3.500v3.500M713.300 147.200v3.500h-3.500M707 150.700h-3.500v-3.500" fill="none" stroke-width="1.200"/><circle cx="741.400" cy="145.300" r="8.700"/><path d="M747.600 151.500l5 5" fill="none" stroke-width="1.300"/><path d="M736.600 143.800v-3.500h3.500M742.900 140.300h3.500v3.500M746.400 147.200v3.500h-3.500M740.100 150.700h-3.500v-3.500" fill="none" stroke-width="1.200"/><rect x="739.400" y="143.300" width="4.200" height="4.200"/><path d="M775 137.500l7.200 4v8.400l-7.200 4.400-7.200-4.400v-8.400z" stroke-linejoin="round"/><path d="M767.800 141.500l7.200 4.300 7.200-4.300M775 145.800v8.500" fill="none"/><path d="M775 137.500v-2.500M767.800 150l-2.800 1.800M782.200 150l2.800 1.800" fill="none" stroke-width="0.900"/><path d="M798.500 143.300l6-6.600h13.300v13.400l-6 6.400h-13.300z" stroke-linejoin="round" stroke-width="1.300"/><path d="M798.500 143.300h13.300v13.200M811.800 143.300l6-6.600" fill="none" stroke-width="1.100"/><path d="M831.500 143.300l6-6.600h13.300v13.400l-6 6.400h-13.300z" stroke-linejoin="round" stroke-width="1.300"/><path d="M831.500 143.300h13.300v13.200M844.800 143.300l6-6.600M837.500 136.700v13.400h13.300M837.500 150.100l-6 6.400" fill="none" stroke-width="1.100"/><path d="M864.800 145.700q9.200-9.600 18.400 0q-9.200 9.600-18.400 0z" stroke-width="1.200"/><circle cx="874" cy="145.700" r="2.700" stroke-width="1.200"/></g>
</svg>
</body></html>
